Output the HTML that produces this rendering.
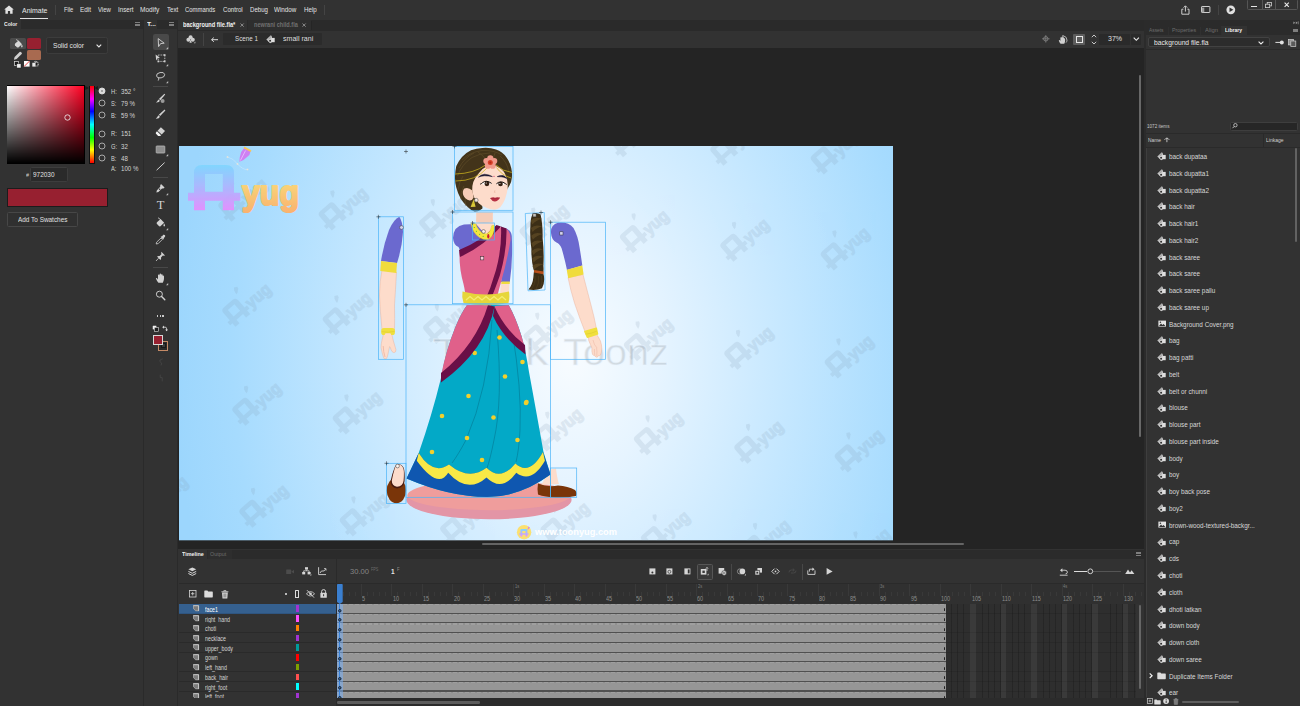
<!DOCTYPE html>
<html><head><meta charset="utf-8"><title>Animate</title>
<style>
html,body{margin:0;padding:0;background:#323232;}
body{width:1300px;height:706px;overflow:hidden;position:relative;font-family:"Liberation Sans", sans-serif;}
#app{position:absolute;left:0;top:0;width:1300px;height:706px;overflow:hidden;background:#323232;}
#app div,#app svg{position:absolute;box-sizing:border-box;}
#app svg{overflow:visible;}
.t{white-space:nowrap;font-family:"Liberation Sans", sans-serif;}
</style></head><body><div id="app">
<div style="left:0px;top:20px;width:143px;height:8.5px;background:#2b2b2b;"></div>
<div style="left:0px;top:20px;width:21px;height:8.5px;background:#323232;"></div>
<div style="left:143px;top:20px;width:1.1px;height:686px;background:#2a2a2a;"></div>
<div style="left:144.1px;top:20px;width:33px;height:8.5px;background:#2b2b2b;"></div>
<div style="left:144.1px;top:20px;width:13.4px;height:8.5px;background:#323232;"></div>
<div style="left:177px;top:20px;width:1.1px;height:686px;background:#2a2a2a;"></div>
<div style="left:178.1px;top:20px;width:966px;height:10.5px;background:#2a2a2a;"></div>
<div style="left:178.1px;top:20px;width:69px;height:10.5px;background:#323232;"></div>
<div style="left:248px;top:20px;width:63px;height:10.5px;background:#2e2e2e;"></div>
<div style="left:311px;top:20.5px;width:0.7px;height:9.5px;background:#252525;"></div>
<div style="left:178.1px;top:30.5px;width:966px;height:17.5px;background:#323232;"></div>
<div style="left:178.1px;top:30px;width:966px;height:0.8px;background:#2a2a2a;"></div>
<div style="left:178.1px;top:48px;width:966px;height:500.5px;background:#242424;"></div>
<div style="left:1144px;top:20px;width:1.7px;height:686px;background:#2b2b2b;"></div>
<div class="t" style="top:18.20px;line-height:12px;font-size:6.0px;color:#f0f0f0;transform:scaleX(0.843);transform-origin:0 50%;font-weight:700;left:4px;">Color</div>
<div style="left:135px;top:22.2px;width:5.4px;height:1.0px;background:#7e7e7e;"></div>
<div style="left:135px;top:23.55px;width:5.4px;height:1.0px;background:#7e7e7e;"></div>
<div style="left:135px;top:24.9px;width:5.4px;height:1.0px;background:#7e7e7e;"></div>
<div style="left:10.2px;top:38px;width:16px;height:11.2px;background:#4b4b4b;border-radius:1.5px"></div>
<svg style="left:13px;top:39px;" width="10" height="9" viewBox="0 0 10 9"><path d="M2.2 4.6L5.6 1.6L9 5.2L5.4 8.4Q4.6 8.9 3.9 8.2L2 6.2Q1.5 5.4 2.2 4.6Z" fill="#d8d8d8"/><path d="M3.2 0.6Q5 1 6 3.2" fill="none" stroke="#d8d8d8" stroke-width="0.8"/><path d="M8.9 5.6Q9.9 7 9.5 8Q8.8 8.8 8.2 8Q7.9 7 8.9 5.6Z" fill="#d8d8d8"/></svg>
<div style="left:27px;top:38.4px;width:14px;height:10.8px;background:#972030;border-radius:1.6px"></div>
<div style="left:27px;top:49.9px;width:14px;height:10.2px;background:#a86a50;border-radius:1.6px"></div>
<svg style="left:13px;top:50.5px;" width="10" height="9" viewBox="0 0 10 9"><path d="M1 8.3L1.6 5.9L6.6 0.9Q7.2 0.4 7.8 0.9L8.7 1.8Q9.2 2.4 8.7 3L3.6 8L1.2 8.7Z" fill="#cfcfcf"/></svg>
<svg style="left:14px;top:61px;" width="8" height="7.5" viewBox="0 0 8 7.5"><rect x="0.4" y="0.4" width="4.2" height="4.2" fill="#1a1a1a" stroke="#e0e0e0" stroke-width="0.7"/><rect x="2.8" y="2.8" width="4.2" height="4.2" fill="#f0f0f0" stroke="#1a1a1a" stroke-width="0.5"/></svg>
<svg style="left:24px;top:61.3px;" width="6" height="6" viewBox="0 0 6 6"><rect x="0" y="0" width="5.6" height="5.6" fill="#ffffff"/><path d="M0 5.6L5.6 0" stroke="#e03030" stroke-width="0.9"/></svg>
<svg style="left:31.5px;top:61px;" width="7" height="7" viewBox="0 0 7 7"><rect x="0.3" y="1.8" width="3.2" height="3.8" fill="#e8e8e8"/><rect x="3.4" y="1.2" width="2.6" height="3.8" fill="#1a1a1a" stroke="#d0d0d0" stroke-width="0.5"/><path d="M2 1Q3.6 -0.3 5.4 0.9M6.6 3L5.4 4.3" fill="none" stroke="#e0e0e0" stroke-width="0.7"/></svg>
<div style="left:46.3px;top:37.4px;width:61.7px;height:16.2px;background:#2d2d2d;border:0.8px solid #3c3c3c;border-radius:2.2px"></div>
<div class="t" style="top:39.90px;line-height:12px;font-size:7.2px;color:#e4e4e4;transform:scaleX(0.922);transform-origin:0 50%;left:53px;">Solid color</div>
<svg style="left:96px;top:44.2px;" width="6" height="4" viewBox="0 0 6 4"><path d="M0.6 0.6L2.9 2.9L5.2 0.6" fill="none" stroke="#e8e8e8" stroke-width="1.1"/></svg>
<div style="left:6.5px;top:85.3px;width:78.5px;height:78.7px;background:#000000;"></div>
<div style="left:7.3px;top:86px;width:77px;height:77.3px;background:linear-gradient(180deg,rgba(0,0,0,0),#000),linear-gradient(90deg,#fff,#ff0022);"></div>
<svg style="left:64px;top:114px;" width="7" height="7" viewBox="0 0 7 7"><circle cx="3.5" cy="3.5" r="2.7" fill="none" stroke="#f4f4f4" stroke-width="0.8"/></svg>
<div style="left:89.2px;top:85.5px;width:5.5px;height:78.3px;background:#111111;"></div>
<div style="left:89.7px;top:86px;width:4.5px;height:77.3px;background:linear-gradient(180deg,#ff0000 0%,#ff00ff 17%,#0000ff 33%,#00ffff 50%,#00ff00 67%,#ffff00 83%,#ff0000 100%);"></div>
<svg style="left:85.2px;top:86px;" width="13.2" height="4.4" viewBox="0 0 13.2 4.4"><path d="M0.2 0.1L4 2.1L0.2 4.1Z" fill="#1c1c1c"/><path d="M13 0.1L9.4 2.1L13 4.1Z" fill="#1c1c1c"/></svg>
<svg style="left:98px;top:87.2px;" width="8" height="8" viewBox="0 0 8 8"><circle cx="4" cy="4" r="3.0" fill="#dcdcdc" stroke="#dcdcdc" stroke-width="0.9"/><circle cx="4" cy="4" r="0.8" fill="#5a5a5a"/></svg>
<div class="t" style="top:85.90px;line-height:12px;font-size:6.6px;color:#d4d4d4;transform:scaleX(0.870);transform-origin:0 50%;left:111px;">H:</div>
<div class="t" style="top:85.90px;line-height:12px;font-size:6.6px;color:#d4d4d4;transform:scaleX(0.930);transform-origin:0 50%;left:120.6px;">352 °</div>
<svg style="left:98px;top:99.3px;" width="8" height="8" viewBox="0 0 8 8"><circle cx="4" cy="4" r="3.0" fill="none" stroke="#b4b4b4" stroke-width="0.9"/></svg>
<div class="t" style="top:98.00px;line-height:12px;font-size:6.6px;color:#d4d4d4;transform:scaleX(0.870);transform-origin:0 50%;left:111px;">S:</div>
<div class="t" style="top:98.00px;line-height:12px;font-size:6.6px;color:#d4d4d4;transform:scaleX(0.930);transform-origin:0 50%;left:120.6px;">79 %</div>
<svg style="left:98px;top:111.4px;" width="8" height="8" viewBox="0 0 8 8"><circle cx="4" cy="4" r="3.0" fill="none" stroke="#b4b4b4" stroke-width="0.9"/></svg>
<div class="t" style="top:110.10px;line-height:12px;font-size:6.6px;color:#d4d4d4;transform:scaleX(0.870);transform-origin:0 50%;left:111px;">B:</div>
<div class="t" style="top:110.10px;line-height:12px;font-size:6.6px;color:#d4d4d4;transform:scaleX(0.930);transform-origin:0 50%;left:120.6px;">59 %</div>
<svg style="left:98px;top:129.6px;" width="8" height="8" viewBox="0 0 8 8"><circle cx="4" cy="4" r="3.0" fill="none" stroke="#b4b4b4" stroke-width="0.9"/></svg>
<div class="t" style="top:128.30px;line-height:12px;font-size:6.6px;color:#d4d4d4;transform:scaleX(0.870);transform-origin:0 50%;left:111px;">R:</div>
<div class="t" style="top:128.30px;line-height:12px;font-size:6.6px;color:#d4d4d4;transform:scaleX(0.930);transform-origin:0 50%;left:120.6px;">151</div>
<svg style="left:98px;top:141.8px;" width="8" height="8" viewBox="0 0 8 8"><circle cx="4" cy="4" r="3.0" fill="none" stroke="#b4b4b4" stroke-width="0.9"/></svg>
<div class="t" style="top:140.50px;line-height:12px;font-size:6.6px;color:#d4d4d4;transform:scaleX(0.870);transform-origin:0 50%;left:111px;">G:</div>
<div class="t" style="top:140.50px;line-height:12px;font-size:6.6px;color:#d4d4d4;transform:scaleX(0.930);transform-origin:0 50%;left:120.6px;">32</div>
<svg style="left:98px;top:154.2px;" width="8" height="8" viewBox="0 0 8 8"><circle cx="4" cy="4" r="3.0" fill="none" stroke="#b4b4b4" stroke-width="0.9"/></svg>
<div class="t" style="top:152.90px;line-height:12px;font-size:6.6px;color:#d4d4d4;transform:scaleX(0.870);transform-origin:0 50%;left:111px;">B:</div>
<div class="t" style="top:152.90px;line-height:12px;font-size:6.6px;color:#d4d4d4;transform:scaleX(0.930);transform-origin:0 50%;left:120.6px;">48</div>
<div class="t" style="top:162.50px;line-height:12px;font-size:6.6px;color:#d4d4d4;transform:scaleX(0.870);transform-origin:0 50%;left:111px;">A:</div>
<div class="t" style="top:162.50px;line-height:12px;font-size:6.6px;color:#d4d4d4;transform:scaleX(0.930);transform-origin:0 50%;left:120.6px;">100 %</div>
<div class="t" style="top:168.70px;line-height:12px;font-size:6.2px;color:#d0d0d0;transform:scaleX(0.870);transform-origin:0 50%;left:26.4px;">#</div>
<div style="left:30.4px;top:167.4px;width:37.8px;height:14.8px;background:#2a2a2a;border:0.8px solid #3d3d3d;border-radius:1.5px"></div>
<div class="t" style="top:168.90px;line-height:12px;font-size:6.6px;color:#e0e0e0;transform:scaleX(0.976);transform-origin:0 50%;left:33px;">972030</div>
<div style="left:7.2px;top:187.8px;width:100.6px;height:19.5px;background:#972030;border:0.9px solid #1c1c1c"></div>
<div style="left:7.2px;top:211.6px;width:71.2px;height:15.5px;background:#303030;border:0.8px solid #474747;border-radius:1.5px"></div>
<div class="t" style="top:213.50px;line-height:12px;font-size:6.6px;color:#e0e0e0;transform:scaleX(0.973);transform-origin:0 50%;left:18px;">Add To Swatches</div>
<div class="t" style="top:18.20px;line-height:12px;font-size:6.2px;color:#f0f0f0;transform:scaleX(1.089);transform-origin:0 50%;font-weight:700;left:147px;">T...</div>
<div style="left:169px;top:22.2px;width:5.4px;height:1.0px;background:#7e7e7e;"></div>
<div style="left:169px;top:23.55px;width:5.4px;height:1.0px;background:#7e7e7e;"></div>
<div style="left:169px;top:24.9px;width:5.4px;height:1.0px;background:#7e7e7e;"></div>
<div style="left:152.6px;top:33.6px;width:16.3px;height:16px;background:#494949;border-radius:2px"></div>
<svg style="left:155.0px;top:36.7px;" width="11" height="11" viewBox="0 0 11 11"><path d="M3.2 1.6L9.2 6.2L5.6 6.6L3.6 9.6Z" fill="none" stroke="#d2d2d2" stroke-width="0.9" stroke-linejoin="round"/></svg>
<svg style="left:165.7px;top:47.0px;" width="2.4" height="2.4" viewBox="0 0 2.4 2.4"><path d="M2.2 0V2.2H0Z" fill="#bdbdbd"/></svg>
<svg style="left:155.0px;top:53.2px;" width="11" height="11" viewBox="0 0 11 11"><path d="M0.6 1.6L5 4.9L2.6 5.2L1.2 7.4Z" fill="#d2d2d2"/><rect x="3.2" y="2" width="6.6" height="6.4" fill="none" stroke="#d2d2d2" stroke-width="0.8" stroke-dasharray="1.4 0.9"/><rect x="8.8" y="1.2" width="1.7" height="1.7" fill="#d2d2d2"/><rect x="8.8" y="7.6" width="1.7" height="1.7" fill="#d2d2d2"/><rect x="2.5" y="7.6" width="1.7" height="1.7" fill="#d2d2d2"/></svg>
<svg style="left:165.7px;top:63.5px;" width="2.4" height="2.4" viewBox="0 0 2.4 2.4"><path d="M2.2 0V2.2H0Z" fill="#bdbdbd"/></svg>
<svg style="left:155.0px;top:70.6px;" width="11" height="11" viewBox="0 0 11 11"><ellipse cx="5.6" cy="4.2" rx="4.1" ry="2.7" fill="none" stroke="#d2d2d2" stroke-width="0.85" transform="rotate(-12 5.6 4.2)"/><path d="M3.2 6.6Q4.6 7.8 3.2 9.6" fill="none" stroke="#d2d2d2" stroke-width="0.85"/></svg>
<svg style="left:165.7px;top:80.89999999999999px;" width="2.4" height="2.4" viewBox="0 0 2.4 2.4"><path d="M2.2 0V2.2H0Z" fill="#bdbdbd"/></svg>
<div style="left:153px;top:86.4px;width:15px;height:0.8px;background:#484848;"></div>
<svg style="left:155.0px;top:92.7px;" width="11" height="11" viewBox="0 0 11 11"><path d="M9.4 0.8L10.2 1.6L5.4 7.2L3.9 6.1Z" fill="#d2d2d2"/><path d="M3.4 6.6L4.9 7.8Q4.6 9.8 1 9.6Q2.4 8.6 3.4 6.6Z" fill="#d2d2d2"/><circle cx="7.6" cy="8" r="2" fill="#9a9a9a"/></svg>
<svg style="left:155.0px;top:109.3px;" width="11" height="11" viewBox="0 0 11 11"><path d="M9.6 0.6L10.4 1.4L5.2 7L3.8 5.8Z" fill="#d2d2d2"/><path d="M3.3 6.3L4.8 7.6Q4.4 9.9 0.8 9.8Q2.3 8.6 3.3 6.3Z" fill="#d2d2d2"/></svg>
<svg style="left:155.0px;top:126.30000000000001px;" width="11" height="11" viewBox="0 0 11 11"><path d="M5.9 1.2L10 5.1L6.7 8.6L2.6 4.7Z" fill="#d2d2d2"/><path d="M2 5.3L6.1 9.2L5.2 10L3.2 10L1 7.8Q0.5 7 1.1 6.3Z" fill="#f2f2f2"/></svg>
<svg style="left:155.0px;top:143.8px;" width="11" height="11" viewBox="0 0 11 11"><rect x="1.2" y="2" width="8.6" height="7" rx="0.6" fill="#8e8e8e" stroke="#b8b8b8" stroke-width="0.8"/></svg>
<svg style="left:165.7px;top:154.10000000000002px;" width="2.4" height="2.4" viewBox="0 0 2.4 2.4"><path d="M2.2 0V2.2H0Z" fill="#bdbdbd"/></svg>
<svg style="left:155.0px;top:161.3px;" width="11" height="11" viewBox="0 0 11 11"><path d="M1.6 9.2L9.6 1.6" stroke="#d2d2d2" stroke-width="1"/></svg>
<div style="left:153px;top:176.6px;width:15px;height:0.8px;background:#484848;"></div>
<svg style="left:155.0px;top:182.6px;" width="11" height="11" viewBox="0 0 11 11"><path d="M6 1L9.6 4.6L8.4 5.6L7 5.6L3.4 9L1.4 9.4L1.8 7.4L5.2 3.8L5.2 2.4Z" fill="#d2d2d2"/><circle cx="4.6" cy="6.2" r="0.8" fill="#323232"/></svg>
<svg style="left:165.7px;top:192.9px;" width="2.4" height="2.4" viewBox="0 0 2.4 2.4"><path d="M2.2 0V2.2H0Z" fill="#bdbdbd"/></svg>
<div class="t" style="left:155.5px;top:198.4px;width:10px;text-align:center;line-height:14px;font-size:12.5px;color:#d2d2d2;font-family:'Liberation Serif',serif;">T</div>
<svg style="left:155.0px;top:217.3px;" width="11" height="11" viewBox="0 0 11 11"><path d="M2 5.2L5.6 2L9.2 5.8L5.4 9.2Q4.6 9.7 3.9 9L1.8 6.8Q1.3 6 2 5.2Z" fill="#d2d2d2"/><path d="M3 0.8Q5 1.3 6 3.6" fill="none" stroke="#d2d2d2" stroke-width="0.8"/><path d="M9.2 6.4Q10.4 8 9.9 9.1Q9.1 9.9 8.5 9.1Q8.1 8 9.2 6.4Z" fill="#d2d2d2"/></svg>
<svg style="left:165.7px;top:227.60000000000002px;" width="2.4" height="2.4" viewBox="0 0 2.4 2.4"><path d="M2.2 0V2.2H0Z" fill="#bdbdbd"/></svg>
<svg style="left:155.0px;top:234.4px;" width="11" height="11" viewBox="0 0 11 11"><path d="M8.2 0.8Q9.4 0.4 10 1.2Q10.6 2 9.8 3L8.6 4.2L9 4.8L8.2 5.6L5.6 3L6.4 2.2L7 2.6Z" fill="#d2d2d2"/><path d="M6 4L7.4 5.4L3.2 9.6L1.2 10L1.6 8.2Z" fill="none" stroke="#d2d2d2" stroke-width="0.8"/></svg>
<svg style="left:155.0px;top:250.8px;" width="11" height="11" viewBox="0 0 11 11"><path d="M6.4 0.8L10 4.4L9 4.8L7.8 4.6L6 6.4Q6.4 8 5.4 9L2 5.6Q3 4.6 4.6 5L6.4 3.2L6.2 2Z" fill="#d2d2d2"/><path d="M3.6 7.2L1 10" stroke="#d2d2d2" stroke-width="0.8"/></svg>
<div style="left:153px;top:267.3px;width:15px;height:0.8px;background:#484848;"></div>
<svg style="left:155.0px;top:272.6px;" width="11" height="11" viewBox="0 0 11 11"><path d="M3.4 9.8Q1.6 7.6 0.9 5.6Q0.9 4.8 1.7 5Q2.6 5.6 3 6.4L3 2.2Q3.1 1.4 3.8 1.5Q4.4 1.6 4.4 2.4L4.6 1.2Q4.8 0.5 5.4 0.6Q6 0.7 6 1.5L6.2 1.6Q6.5 1 7.1 1.2Q7.6 1.4 7.6 2.2L7.8 2.8Q8.2 2.4 8.7 2.7Q9.1 3 9 3.8Q9.2 6 8.6 7.8Q8.2 9 7.8 9.8Z" fill="#d2d2d2"/></svg>
<svg style="left:165.7px;top:282.90000000000003px;" width="2.4" height="2.4" viewBox="0 0 2.4 2.4"><path d="M2.2 0V2.2H0Z" fill="#bdbdbd"/></svg>
<svg style="left:155.0px;top:290.1px;" width="11" height="11" viewBox="0 0 11 11"><circle cx="4.4" cy="4.2" r="3" fill="none" stroke="#d2d2d2" stroke-width="0.95"/><path d="M6.6 6.4L9.8 9.8" stroke="#d2d2d2" stroke-width="1.4" stroke-linecap="round"/></svg>
<div style="left:156.6px;top:315.3px;width:1.6px;height:1.5px;background:#c8c8c8;"></div>
<div style="left:159.5px;top:315.3px;width:1.6px;height:1.5px;background:#c8c8c8;"></div>
<div style="left:162.4px;top:315.3px;width:1.6px;height:1.5px;background:#c8c8c8;"></div>
<svg style="left:152.4px;top:324.6px;" width="7" height="7" viewBox="0 0 7 7"><rect x="0.4" y="0.4" width="4.4" height="4.4" fill="#f0f0f0" stroke="#202020" stroke-width="0.5"/><rect x="2.3" y="2.3" width="4.2" height="4.2" fill="#202020" stroke="#e0e0e0" stroke-width="0.6"/></svg>
<svg style="left:162.4px;top:325px;" width="6" height="6.5" viewBox="0 0 6 6.5"><path d="M0.8 2.2H3.2Q4.6 2.2 4.6 3.8V6" fill="none" stroke="#d8d8d8" stroke-width="0.9"/><path d="M2 0.6L0.3 2.2L2 3.8Z" fill="#d8d8d8"/><path d="M3.2 4.6L4.6 6.3L6 4.6Z" fill="#d8d8d8"/></svg>
<div style="left:158.2px;top:340.6px;width:9.8px;height:10.2px;background:#2a2a2a;border:1.6px solid #c48a66"></div>
<div style="left:160.6px;top:343px;width:5px;height:5.4px;background:#3a3a3a;border:0.6px solid #1a1a1a"></div>
<div style="left:152.9px;top:334.8px;width:10.2px;height:10.2px;background:#972030;border:0.7px solid #d8d8d8"></div>
<svg style="left:157.5px;top:357.5px;" width="6" height="8" viewBox="0 0 6 8"><path d="M4.8 0.8Q1.2 1.4 1.8 3.4Q5 5 3 7.4" fill="none" stroke="#484848" stroke-width="0.8"/></svg>
<svg style="left:157.5px;top:374px;" width="6" height="8" viewBox="0 0 6 8"><path d="M2.2 0.6V3.6H4.2V7.4" fill="none" stroke="#484848" stroke-width="0.8"/></svg>
<svg style="left:4px;top:5.4px;" width="10" height="9" viewBox="0 0 10 9"><path d="M5 0.4L9.8 4.6H8.6V8.8H6.1V6H3.9V8.8H1.4V4.6H0.2Z" fill="#e2e2e2"/></svg>
<div class="t" style="top:5.00px;line-height:12px;font-size:7.4px;color:#e8e8e8;transform:scaleX(0.939);transform-origin:0 50%;left:22px;">Animate</div>
<div style="left:20.3px;top:17.7px;width:28px;height:1.1px;background:#e0e0e0;"></div>
<div style="left:54.8px;top:5px;width:0.8px;height:9.5px;background:#444444;"></div>
<div class="t" style="top:3.70px;line-height:12px;font-size:7.0px;color:#e2e2e2;transform:scaleX(0.825);transform-origin:0 50%;left:64px;">File</div>
<div class="t" style="top:3.70px;line-height:12px;font-size:7.0px;color:#e2e2e2;transform:scaleX(0.912);transform-origin:0 50%;left:80px;">Edit</div>
<div class="t" style="top:3.70px;line-height:12px;font-size:7.0px;color:#e2e2e2;transform:scaleX(0.851);transform-origin:0 50%;left:97.9px;">View</div>
<div class="t" style="top:3.70px;line-height:12px;font-size:7.0px;color:#e2e2e2;transform:scaleX(0.880);transform-origin:0 50%;left:117.9px;">Insert</div>
<div class="t" style="top:3.70px;line-height:12px;font-size:7.0px;color:#e2e2e2;transform:scaleX(0.936);transform-origin:0 50%;left:140.2px;">Modify</div>
<div class="t" style="top:3.70px;line-height:12px;font-size:7.0px;color:#e2e2e2;transform:scaleX(0.880);transform-origin:0 50%;left:166.8px;">Text</div>
<div class="t" style="top:3.70px;line-height:12px;font-size:7.0px;color:#e2e2e2;transform:scaleX(0.844);transform-origin:0 50%;left:185.3px;">Commands</div>
<div class="t" style="top:3.70px;line-height:12px;font-size:7.0px;color:#e2e2e2;transform:scaleX(0.873);transform-origin:0 50%;left:222.6px;">Control</div>
<div class="t" style="top:3.70px;line-height:12px;font-size:7.0px;color:#e2e2e2;transform:scaleX(0.868);transform-origin:0 50%;left:249.5px;">Debug</div>
<div class="t" style="top:3.70px;line-height:12px;font-size:7.0px;color:#e2e2e2;transform:scaleX(0.896);transform-origin:0 50%;left:274.4px;">Window</div>
<div class="t" style="top:3.70px;line-height:12px;font-size:7.0px;color:#e2e2e2;transform:scaleX(0.889);transform-origin:0 50%;left:303.6px;">Help</div>
<div style="left:323.5px;top:5px;width:0.8px;height:9.5px;background:#444444;"></div>
<svg style="left:1180.5px;top:4.5px;" width="9" height="10" viewBox="0 0 9 10"><path d="M2.4 4.2H0.8V9.2H8V4.2H6.4" fill="none" stroke="#e0e0e0" stroke-width="0.9"/><path d="M4.4 6.6V1.2M2.6 2.6L4.4 0.8L6.2 2.6" fill="none" stroke="#e0e0e0" stroke-width="0.9"/></svg>
<svg style="left:1201px;top:6.4px;" width="10" height="7" viewBox="0 0 10 7"><rect x="0.5" y="0.5" width="8.4" height="6" rx="0.6" fill="none" stroke="#e0e0e0" stroke-width="0.9"/><rect x="0.9" y="1.6" width="2.4" height="4.6" fill="#9a9a9a"/></svg>
<div style="left:1218px;top:4.5px;width:0.8px;height:10px;background:#444444;"></div>
<svg style="left:1225.8px;top:5px;" width="10" height="10" viewBox="0 0 10 10"><circle cx="4.8" cy="4.8" r="4.4" fill="#e0e0e0"/><path d="M3.5 2.5L7.4 4.8L3.5 7.1Z" fill="#323232"/></svg>
<div style="left:1246.5px;top:-1px;width:51.8px;height:10.6px;background:rgba(0,0,0,0);border:0.8px solid #555555;border-radius:1.5px"></div>
<div style="left:1261.6px;top:0px;width:0.8px;height:9px;background:#555555;"></div>
<div style="left:1274.8px;top:0px;width:0.8px;height:9px;background:#555555;"></div>
<div style="left:1250.8px;top:5.8px;width:6px;height:1.1px;background:#e4e4e4;"></div>
<svg style="left:1264.5px;top:1.6px;" width="8" height="6.5" viewBox="0 0 8 6.5"><rect x="2.2" y="0.5" width="4.2" height="3.4" fill="none" stroke="#d0d0d0" stroke-width="0.8"/><rect x="0.5" y="2.2" width="4.2" height="3.4" fill="#323232" stroke="#d0d0d0" stroke-width="0.8"/></svg>
<svg style="left:1284px;top:2px;" width="6" height="6" viewBox="0 0 6 6"><path d="M0.6 0.6L4.8 4.8M4.8 0.6L0.6 4.8" stroke="#ececec" stroke-width="1.1"/></svg>
<div class="t" style="top:18.90px;line-height:12px;font-size:6.3px;color:#f2f2f2;transform:scaleX(0.895);transform-origin:0 50%;font-weight:700;left:182.7px;">background file.fla*</div>
<div class="t" style="top:18.90px;line-height:12px;font-size:6.3px;color:#707070;transform:scaleX(0.889);transform-origin:0 50%;font-weight:700;left:253.8px;">newrani child.fla</div>
<svg style="left:239.5px;top:23px;" width="4.5" height="4.5" viewBox="0 0 4.5 4.5"><path d="M0.5 0.5L3.7 3.7M3.7 0.5L0.5 3.7" stroke="#b0b0b0" stroke-width="0.7"/></svg>
<svg style="left:302px;top:23px;" width="4.5" height="4.5" viewBox="0 0 4.5 4.5"><path d="M0.5 0.5L3.7 3.7M3.7 0.5L0.5 3.7" stroke="#b0b0b0" stroke-width="0.7"/></svg>
<svg style="left:185.8px;top:35px;" width="10" height="9" viewBox="0 0 10 9"><circle cx="4.6" cy="2.2" r="2" fill="#cfcfcf"/><circle cx="2.4" cy="4.8" r="2" fill="#cfcfcf"/><circle cx="6.8" cy="4.8" r="2" fill="#cfcfcf"/><path d="M4.6 4.4L5.8 7.8H3.4Z" fill="#cfcfcf"/><path d="M9.4 6.6V8.2H7.8Z" fill="#bdbdbd"/></svg>
<div style="left:203px;top:33px;width:0.8px;height:12.5px;background:#444444;"></div>
<svg style="left:211.3px;top:36.6px;" width="7.5" height="5.5" viewBox="0 0 7.5 5.5"><path d="M0.6 2.7H7M2.8 0.6L0.6 2.7L2.8 4.8" fill="none" stroke="#dcdcdc" stroke-width="1"/></svg>
<div style="left:222.9px;top:33.3px;width:99px;height:11.9px;background:#2b2b2b;border-radius:1px"></div>
<div class="t" style="top:32.90px;line-height:12px;font-size:6.8px;color:#dedede;transform:scaleX(0.922);transform-origin:0 50%;left:234.5px;">Scene 1</div>
<svg style="left:266px;top:35px;" width="9.5" height="8" viewBox="0 0 9.5 8"><path d="M0.3 4.6L4.9 0.3L6 1.4V7.2L4.2 8.2Z" fill="#c4c4c4"/><path d="M1.6 3.6L5 0.9M2.4 4.4L5.4 1.9" stroke="#8a8a8a" stroke-width="0.5"/><rect x="5.3" y="2.9" width="3.4" height="4.3" fill="#dedede"/><circle cx="4.1" cy="5.8" r="1.75" fill="#d8d8d8"/><circle cx="4.1" cy="5.8" r="0.95" fill="#262626"/></svg>
<div class="t" style="top:32.90px;line-height:12px;font-size:6.8px;color:#dedede;transform:scaleX(1.041);transform-origin:0 50%;left:282.7px;">small rani</div>
<svg style="left:1042px;top:35.4px;" width="8" height="8" viewBox="0 0 8 8"><circle cx="3.8" cy="3.8" r="2.2" fill="none" stroke="#8a8a8a" stroke-width="0.8"/><path d="M3.8 0V7.6M0 3.8H7.6" stroke="#8a8a8a" stroke-width="0.7"/></svg>
<svg style="left:1057.5px;top:34.6px;" width="10" height="9.5" viewBox="0 0 10 9.5"><path d="M2.6 8.8Q1.2 7 0.8 5.4Q0.9 4.8 1.5 5Q2.2 5.5 2.4 6L2.4 2.8Q2.5 2.2 3 2.3Q3.5 2.4 3.5 3L3.6 2Q3.8 1.5 4.3 1.6Q4.7 1.7 4.7 2.3L4.9 2.4Q5.2 2 5.6 2.2Q6 2.4 6 3L6.2 3.4Q6.6 3.2 6.9 3.5Q7.2 3.8 7.1 4.4Q7.2 6.2 6.8 7.4Q6.5 8.2 6.2 8.8Z" fill="#d0d0d0"/><path d="M5.4 0.8Q9 1.6 9 5.2Q8.9 6.6 8 7.6" fill="none" stroke="#d0d0d0" stroke-width="0.8"/><path d="M4.4 0L6 0.9L4.6 2Z" fill="#d0d0d0"/></svg>
<div style="left:1073px;top:33.5px;width:12.2px;height:11.4px;background:#5c5c5c;border-radius:1px"></div>
<div style="left:1075.6px;top:35.8px;width:7px;height:6.8px;background:rgba(0,0,0,0);border:1.5px solid #e6e6e6"></div>
<svg style="left:1090.8px;top:33.6px;" width="6" height="11" viewBox="0 0 6 11"><path d="M0.8 3.2L3 1L5.2 3.2M0.8 7.8L3 10L5.2 7.8" fill="none" stroke="#d8d8d8" stroke-width="0.9"/></svg>
<div style="left:1098.7px;top:33.5px;width:31.8px;height:11.4px;background:#2a2a2a;border-radius:1px"></div>
<div class="t" style="top:33.30px;line-height:12px;font-size:6.8px;color:#e0e0e0;transform:scaleX(1.029);transform-origin:0 50%;left:1108px;">37%</div>
<div style="left:1131px;top:33.5px;width:10px;height:11.4px;background:#2a2a2a;border-radius:1px"></div>
<svg style="left:1132.6px;top:37.2px;" width="7" height="4.5" viewBox="0 0 7 4.5"><path d="M0.7 0.7L3.3 3.3L5.9 0.7" fill="none" stroke="#ececec" stroke-width="1.1"/></svg>
<svg style="left:0px;top:0px;" width="1300" height="706" viewBox="0 0 1300 706"><defs>
<radialGradient id="bgG" gradientUnits="userSpaceOnUse" cx="572" cy="355" r="400" gradientTransform="translate(572 355) scale(1 1.42) translate(-572 -355)">
<stop offset="0" stop-color="#f8fcff"/><stop offset="0.22" stop-color="#e6f4ff"/><stop offset="0.55" stop-color="#c4e7ff"/><stop offset="0.85" stop-color="#a6dbfe"/><stop offset="1" stop-color="#9cd6fd"/></radialGradient>
<linearGradient id="lgA" x1="0" y1="0" x2="0" y2="1"><stop offset="0" stop-color="#80d6ff"/><stop offset="0.55" stop-color="#b4b0ff"/><stop offset="1" stop-color="#e78cff"/></linearGradient>
<linearGradient id="lgY" x1="0" y1="0" x2="0" y2="1"><stop offset="0" stop-color="#ffe272"/><stop offset="1" stop-color="#ffb066"/></linearGradient>
<clipPath id="stageClip"><rect x="179" y="146" width="714" height="394.29999999999995"/></clipPath>
<g id="wm"><g transform="scale(0.49) translate(-214 -187.5)"><path d="M194 173Q194 165 202 165H226Q234 165 234 173V192.7H240.3V200.8H234V210.2H222.8V200.8H205V210.2H194V200.8H188V192.7H194ZM205 174V191.8H222.8V174Z" fill-rule="evenodd" stroke="none"/><text x="242" y="204.6" font-family="Liberation Sans, sans-serif" font-weight="700" font-size="35" textLength="57" lengthAdjust="spacingAndGlyphs" stroke-width="2.2" stroke-linejoin="round">yug</text><path d="M244.6 147.6L250.6 151L249.4 155L243.5 160L239.4 161.8L239.8 157L241.2 152Z" stroke="none"/></g></g>
</defs>
<rect x="179" y="146" width="714" height="394.29999999999995" fill="url(#bgG)"/>
<g clip-path="url(#stageClip)">
<use href="#wm" transform="translate(623.1 142.4) rotate(-41)" fill="#7f96ad" stroke="#7f96ad" opacity="0.165"/>
<use href="#wm" transform="translate(723.5 151.0) rotate(-41)" fill="#7f96ad" stroke="#7f96ad" opacity="0.165"/>
<use href="#wm" transform="translate(823.9 159.6) rotate(-41)" fill="#7f96ad" stroke="#7f96ad" opacity="0.165"/>
<use href="#wm" transform="translate(231.5 207.0) rotate(-41)" fill="#7f96ad" stroke="#7f96ad" opacity="0.165"/>
<use href="#wm" transform="translate(331.9 215.6) rotate(-41)" fill="#7f96ad" stroke="#7f96ad" opacity="0.165"/>
<use href="#wm" transform="translate(432.3 224.2) rotate(-41)" fill="#7f96ad" stroke="#7f96ad" opacity="0.165"/>
<use href="#wm" transform="translate(532.7 232.8) rotate(-41)" fill="#7f96ad" stroke="#7f96ad" opacity="0.165"/>
<use href="#wm" transform="translate(633.1 238.4) rotate(-41)" fill="#7f96ad" stroke="#7f96ad" opacity="0.165"/>
<use href="#wm" transform="translate(733.5 247.0) rotate(-41)" fill="#7f96ad" stroke="#7f96ad" opacity="0.165"/>
<use href="#wm" transform="translate(833.9 255.6) rotate(-41)" fill="#7f96ad" stroke="#7f96ad" opacity="0.165"/>
<use href="#wm" transform="translate(235.5 312.0) rotate(-41)" fill="#7f96ad" stroke="#7f96ad" opacity="0.165"/>
<use href="#wm" transform="translate(335.9 320.6) rotate(-41)" fill="#7f96ad" stroke="#7f96ad" opacity="0.165"/>
<use href="#wm" transform="translate(436.3 329.2) rotate(-41)" fill="#7f96ad" stroke="#7f96ad" opacity="0.165"/>
<use href="#wm" transform="translate(536.7 337.8) rotate(-41)" fill="#7f96ad" stroke="#7f96ad" opacity="0.165"/>
<use href="#wm" transform="translate(637.1 346.4) rotate(-41)" fill="#7f96ad" stroke="#7f96ad" opacity="0.165"/>
<use href="#wm" transform="translate(737.5 355.0) rotate(-41)" fill="#7f96ad" stroke="#7f96ad" opacity="0.165"/>
<use href="#wm" transform="translate(837.9 363.6) rotate(-41)" fill="#7f96ad" stroke="#7f96ad" opacity="0.165"/>
<use href="#wm" transform="translate(245.5 411.0) rotate(-41)" fill="#7f96ad" stroke="#7f96ad" opacity="0.165"/>
<use href="#wm" transform="translate(345.9 419.6) rotate(-41)" fill="#7f96ad" stroke="#7f96ad" opacity="0.165"/>
<use href="#wm" transform="translate(446.3 428.2) rotate(-41)" fill="#7f96ad" stroke="#7f96ad" opacity="0.165"/>
<use href="#wm" transform="translate(546.7 436.8) rotate(-41)" fill="#7f96ad" stroke="#7f96ad" opacity="0.165"/>
<use href="#wm" transform="translate(647.1 440.4) rotate(-41)" fill="#7f96ad" stroke="#7f96ad" opacity="0.165"/>
<use href="#wm" transform="translate(747.5 449.0) rotate(-41)" fill="#7f96ad" stroke="#7f96ad" opacity="0.165"/>
<use href="#wm" transform="translate(847.9 457.6) rotate(-41)" fill="#7f96ad" stroke="#7f96ad" opacity="0.165"/>
<use href="#wm" transform="translate(152.1 504.4) rotate(-41)" fill="#7f96ad" stroke="#7f96ad" opacity="0.165"/>
<use href="#wm" transform="translate(252.5 513.0) rotate(-41)" fill="#7f96ad" stroke="#7f96ad" opacity="0.165"/>
<use href="#wm" transform="translate(352.9 521.6) rotate(-41)" fill="#7f96ad" stroke="#7f96ad" opacity="0.165"/>
<use href="#wm" transform="translate(453.3 530.2) rotate(-41)" fill="#7f96ad" stroke="#7f96ad" opacity="0.165"/>
<use href="#wm" transform="translate(553.7 530.8) rotate(-41)" fill="#7f96ad" stroke="#7f96ad" opacity="0.165"/>
<use href="#wm" transform="translate(654.1 539.4) rotate(-41)" fill="#7f96ad" stroke="#7f96ad" opacity="0.165"/>
<use href="#wm" transform="translate(754.5 548.0) rotate(-41)" fill="#7f96ad" stroke="#7f96ad" opacity="0.165"/>
<use href="#wm" transform="translate(854.9 556.6) rotate(-41)" fill="#7f96ad" stroke="#7f96ad" opacity="0.165"/>
<g font-family="Liberation Sans, sans-serif" font-size="37" fill="#90989f" fill-opacity="0.33" stroke="#eaf5ff" stroke-opacity="0.6" stroke-width="1.2"><text x="432.5" y="365.3" textLength="116" lengthAdjust="spacingAndGlyphs">Think</text><text x="563.3" y="365.3" textLength="105.5" lengthAdjust="spacingAndGlyphs">Toonz</text></g>
<g opacity="0.93"><path d="M194 173Q194 165 202 165H226Q234 165 234 173V192.7H240.3V200.8H234V210.2H222.8V200.8H205V210.2H194V200.8H188V192.7H194ZM205 174V191.8H222.8V174Z" fill="url(#lgA)" fill-rule="evenodd"/>
<text x="242" y="204.6" font-family="Liberation Sans, sans-serif" font-weight="700" font-size="35" textLength="57" lengthAdjust="spacingAndGlyphs" fill="url(#lgY)" stroke="url(#lgY)" stroke-width="2.2" stroke-linejoin="round">yug</text>
<path d="M244.6 147.6L250.6 151L249.4 155L243.5 160L239.4 161.8L239.8 157L241.2 152Z" fill="#d27af2"/><path d="M245.6 150.5L240.3 160.6" stroke="#f0c0ff" stroke-width="0.8"/><path d="M244.3 146.6L251.4 150.3L250.7 151.9L243.6 148.2Z" fill="#ffc64e"/>
<path d="M227.5 157Q233 158 237.5 164Q243 170 247.5 169.5" fill="none" stroke="#ffffff" stroke-opacity="0.55" stroke-width="0.5"/><rect x="226.7" y="156.2" width="1.6" height="1.6" fill="#ffe8d0" fill-opacity="0.8"/><rect x="236.7" y="163.2" width="1.6" height="1.6" fill="#ffe8d0" fill-opacity="0.8"/><rect x="246.7" y="168.7" width="1.6" height="1.6" fill="#ffe8d0" fill-opacity="0.8"/></g>
<ellipse cx="489" cy="499.8" rx="82.6" ry="19.5" fill="#e395a6"/>
<ellipse cx="489" cy="495.2" rx="81.6" ry="15" fill="#ef9d9c"/>
<path d="M532.5 214.2Q536.5 211.8 540.6 214.6Q542.8 224 542.6 238Q544.2 252 543.4 266Q543.8 270 543.2 273Q545.8 281 542 288.2Q536.5 290.8 528.4 289.6Q532.8 284.5 533.4 277Q533.6 274 534 271Q531 260 531.4 249Q529.6 236 530.4 226Q530.4 218.5 532.5 214.2Z" fill="#3c2e16"/>
<path d="M530.8 220.5Q534.8 216.0 542.1 219.0Q536.8 219.5 532.3 224.5Z" fill="#5c4824" fill-opacity="0.8"/>
<path d="M531.0 228.1Q535.0 223.6 542.3 226.6Q537.0 227.1 532.5 232.1Z" fill="#5c4824" fill-opacity="0.8"/>
<path d="M531.3 235.7Q535.3 231.2 542.6 234.2Q537.3 234.7 532.8 239.7Z" fill="#5c4824" fill-opacity="0.8"/>
<path d="M531.5 243.3Q535.5 238.8 542.8 241.8Q537.5 242.3 533.0 247.3Z" fill="#5c4824" fill-opacity="0.8"/>
<path d="M531.8 250.9Q535.8 246.4 543.1 249.4Q537.8 249.9 533.3 254.9Z" fill="#5c4824" fill-opacity="0.8"/>
<path d="M532.1 258.5Q536.1 254.0 543.4 257.0Q538.1 257.5 533.6 262.5Z" fill="#5c4824" fill-opacity="0.8"/>
<path d="M532.4 266.1Q536.4 261.6 543.7 264.6Q538.4 265.1 533.9 270.1Z" fill="#5c4824" fill-opacity="0.8"/>
<path d="M534.2 270L543.6 271.6L543.3 274.2L534 272.6Z" fill="#b8501c"/>
<path d="M535 276Q536 284 531 289M538.5 276Q539.5 283 536 289.5M541.5 276Q543 282 540.5 288" fill="none" stroke="#5c4824" stroke-width="0.5" stroke-opacity="0.8"/>
<path d="M382 270L396.5 272Q395.5 290 394.5 305Q394.8 320 394.5 330L382 330Q380 310 379.5 295Q379.8 280 382 270Z" fill="#fddccb" stroke="#e8a890" stroke-width="0.4"/>
<path d="M383.4 334L391.8 334Q392.6 338 393.4 341Q394.6 345 395.9 349.6Q396.2 352.4 393.9 352.7Q391.6 352 391 349.6Q390.6 347.6 389.6 346.6Q388.8 350 388 354Q387.4 357.6 386 359Q384.4 359.6 383.6 357.6Q382 353 381 347.6Q381 344 382 340Q382.8 337 383.4 334Z" fill="#fddccb" stroke="#e8a890" stroke-width="0.4"/>
<path d="M383.2 346Q383.4 352 385 357" fill="none" stroke="#eeb8a4" stroke-width="0.9"/>
<rect x="381.2" y="328.1" width="13.7" height="6.9" rx="2.6" fill="#f0e03e"/><path d="M381.6 331.6Q388 333 394.6 331.4" fill="none" stroke="#d8c62c" stroke-width="0.5"/><path d="M384.6 335.2Q384.8 333.2 386 333.2H390Q391 333.2 391.2 335.2Z" fill="#fddccb"/>
<path d="M399.3 216.8Q402.5 221 403 232Q402 248 397 263L381 261Q383.5 245 389 230Q394 219 399.3 216.8Z" fill="#6b69cf"/>
<path d="M381 261L397 263L396.3 273L380.3 271Z" fill="#f0dc3c"/>
<path d="M568 277.5L583 274.5Q587 290 591 305Q594.5 318 596.5 329L585.5 333Q579.5 318 574.5 303Q570.5 290 568 277.5Z" fill="#fddccb" stroke="#e8a890" stroke-width="0.4"/>
<path d="M588.7 335.3L596 333.6Q598.6 337 600.5 341Q601.8 345 601.8 348.7Q601.6 352.4 600.5 355Q599.6 356.2 598.6 355.4Q598 357.4 596.6 357.2Q595 356.8 594.6 355.4Q593.4 355.6 592.5 354.4Q591.6 351.6 591.9 348Q590.4 344.6 588.7 340.4Q588.2 337.6 588.7 335.3Z" fill="#fddccb" stroke="#e8a890" stroke-width="0.4"/>
<path d="M593 340Q594 345 596.6 347.4M596.6 347.4Q597.2 352 596.8 356M594.4 349Q594.4 352.6 594.8 355.2" fill="none" stroke="#e8b09c" stroke-width="0.45"/>
<path d="M584.9 331.5L596.3 328.3L597.5 333.9L587.4 337.2Z" fill="#f0e03e" stroke="#f0e03e" stroke-width="1.6" stroke-linejoin="round"/><path d="M585.6 334.2Q591 333.8 597 331" fill="none" stroke="#d8c62c" stroke-width="0.5"/>
<path d="M551 233Q550.5 224.5 558 222.7Q568 221.5 573.5 228Q578 236 579.5 247Q581 256 582.3 265.5L567 270Q564.5 258 561.5 248Q559.5 243.5 556.5 242.5Q551.5 240 551 233Z" fill="#6b69cf"/>
<path d="M566.7 269.8L582.3 265.5L583.6 274.5L568.2 278.3Z" fill="#f0dc3c"/>
<ellipse cx="396.4" cy="490.6" rx="9.7" ry="12.7" fill="#7a3509"/>
<path d="M390.6 481Q390.4 487.6 397 488.4Q404 488 404.6 481Q405 472 403.8 468Q402 464.2 398.6 464.2Q395.6 464.4 394.4 468Q392 474 390.6 481Z" fill="#4a1c10"/>
<path d="M391.8 480.6Q391.8 486 397 486.8Q403 486.4 403.6 480.6Q404.4 472 403.4 468.4Q401.8 464.6 398.6 464.6Q395.8 464.8 394.8 468.2Q393 474 391.8 480.6Z" fill="#fddccb"/>
<path d="M547 470L556 468.5Q557 478 559 484L541 485Q545 480 547 470Z" fill="#fddccb"/>
<path d="M538 483.5Q548 487.5 558 485.5Q568 486 575 490Q577.5 493 576 496Q566 498 556 497.5Q545 497 538 494.5Q537 489 538 483.5Z" fill="#7a3509"/>
<path d="M467 305L508.7 305Q516 318 521.5 336Q526 352 529 372Q536 410 543.5 452L550.5 474.6Q520 497 487 497Q450 497 406.5 478.5L418.7 453Q432 415 441 378Q446 350 455 328Q461 313 467 305Z" fill="#03a9c7"/>
<path d="M418.7 453Q432.95 475.65 449 464.5Q469.05 481.25 486.5 467.8Q500.45 481.7 515.4 463.6Q529.2 476.6 543 452L550.5 474.6Q520 497 487 497Q450 497 406.5 478.5Z" fill="#0f57b0"/>
<path d="M418.7 453Q432.95 475.65 449 464.5Q469.05 481.25 486.5 467.8Q500.45 481.7 515.4 463.6Q529.2 476.6 543 452L544.9 460.8Q531.4 484.2 516.3 472.8Q501.8 492.5 486.5 477.4Q467.65 494.3 448.2 472.8Q438.1 489.8 416.8 460.8Z" fill="#f8e846"/>
<path d="M492 320Q488 390 466 440Q458 455 452 463" fill="none" stroke="#046f88" stroke-width="0.5"/>
<path d="M497 330Q503 400 494 440Q490 460 487 468" fill="none" stroke="#046f88" stroke-width="0.5"/>
<path d="M512 330Q522 390 520 430Q519 450 516 462" fill="none" stroke="#046f88" stroke-width="0.5"/>
<circle cx="499.5" cy="337.5" r="2.3" fill="#f2d02c"/>
<circle cx="474.7" cy="353" r="2.3" fill="#f2d02c"/>
<circle cx="522.5" cy="362" r="2.3" fill="#f2d02c"/>
<circle cx="505" cy="376.5" r="2.3" fill="#f2d02c"/>
<circle cx="468.5" cy="396" r="2.3" fill="#f2d02c"/>
<circle cx="526.5" cy="402" r="2.3" fill="#f2d02c"/>
<circle cx="442" cy="416" r="2.3" fill="#f2d02c"/>
<circle cx="493.5" cy="417.5" r="2.3" fill="#f2d02c"/>
<circle cx="526" cy="403" r="2.3" fill="#f2d02c"/>
<circle cx="467" cy="438" r="2.3" fill="#f2d02c"/>
<circle cx="517.5" cy="440" r="2.3" fill="#f2d02c"/>
<circle cx="432" cy="452" r="2.3" fill="#f2d02c"/>
<circle cx="482" cy="460" r="2.3" fill="#f2d02c"/>
<path d="M467 305L491 305Q480 340 441 376Q446 350 455 328Q461 313 467 305Z" fill="#e0608a"/>
<path d="M488 305L494.5 306.5Q486 350 441 382.5L441 373Q476 345 488 305Z" fill="#6a0f47"/>
<path d="M495 306L508.7 305Q516 318 521.5 336Q524 344 525.3 351Q505 335 494 313Z" fill="#e0608a"/>
<path d="M494.5 306.5Q505 330 525 345L525.5 354.5Q503 338 493 316Z" fill="#6a0f47"/>
<path d="M476.3 212.5L492.8 212.5Q492.3 220 493.8 226L486 235L479 232L475.3 226Q476.8 220 476.3 212.5Z" fill="#fddccb"/><path d="M476.3 212.5L492.8 212.5Q492.4 217 492.8 221.5Q484 224.5 476 221.5Q476.6 217 476.3 212.5Z" fill="#f5cdb9"/>
<path d="M501 282L509.5 282L509 294L500 294Z" fill="#fddccb"/>
<path d="M453 238Q453.5 226 464 224.5L476 224L490 240L462 254L458.5 247Q453.5 245 453 238Z" fill="#6b69cf"/>
<path d="M504 228Q511 229 511.8 236Q513 260 509.8 282L501 282Q505 255 504 228Z" fill="#6b69cf"/>
<path d="M501.5 281.5L509.8 281.5L509.7 284L501.3 284Z" fill="#f0dc3c"/>
<path d="M459.5 252Q480 244 497 226.5L506 228.5Q511 232 510.5 240Q507 262 501 282Q498 292 496 303L466 303Q465.5 292 463.5 284Q459 268 459.5 252Z" fill="#e0608a"/>
<path d="M459 250Q480 242 496.5 225L501 226.5Q484 246 460 257Z" fill="#6a0f47"/>
<path d="M501 226.5L506.5 228.5Q507 250 500 275Q494 292 489 304L483.5 304Q491 288 496 270Q502 248 501 226.5Z" fill="#6a0f47"/>
<path d="M462.5 291.5Q485 297.5 509 291.5Q510 298 508.5 303Q485 307.5 463.5 303Q461.5 297 462.5 291.5Z" fill="#e6d63a"/>
<path d="M466 300L470 296.5L474 300L478 296.5L482 300L486 296.5L490 300L494 296.5L498 300L502 296.5L506 300" fill="none" stroke="#f6ee70" stroke-width="1.3"/>
<path d="M471 223.8Q472.5 233 479.5 237.5Q484 240.3 488 239.7Q494.8 236 494.6 225L491.7 225.7Q491 231.5 486.5 234Q482 233.5 479 230Q476.5 227 475.8 223.8Z" fill="#f4e63e" stroke="#dccb2a" stroke-width="0.4"/>
<circle cx="474.3" cy="227.5" r="0.55" fill="#48b030"/>
<circle cx="476.4" cy="231.2" r="0.55" fill="#48b030"/>
<circle cx="479.6" cy="234.2" r="0.55" fill="#48b030"/>
<circle cx="483.2" cy="236.3" r="0.55" fill="#48b030"/>
<ellipse cx="488.3" cy="236.2" rx="1.1" ry="2.3" fill="#cc1830"/>
<path d="M482.4 147.9Q490 147.2 496 149.6Q502.5 152 506.2 157Q510 162 511.3 168.3Q512.3 173 511.9 177.4Q511.5 182 509.6 185.3L506.8 190L500 172L480 174L474 197Q478 200 480 203.5Q483 206 482.4 208.5Q479 211.8 474.5 211.4Q470.5 210 467.7 206.9Q463.5 203 460.9 198.9Q457.5 193 456.3 187.6Q454.8 182 455 176.3Q455.2 171 456.3 166Q458.5 161 462 157Q466 152.5 471 150.2Q476.5 148.2 482.4 147.9Z" fill="#43341a"/>
<path d="M459 168Q464 158 474 153" fill="none" stroke="#66522c" stroke-width="0.7" stroke-opacity="0.75"/>
<path d="M457.5 176Q462 164 472 157.5Q480 153 490 153" fill="none" stroke="#66522c" stroke-width="0.7" stroke-opacity="0.75"/>
<path d="M462 160Q470 152 482 150.5Q494 150 502 155" fill="none" stroke="#66522c" stroke-width="0.7" stroke-opacity="0.75"/>
<path d="M458 190Q459 182 463 176" fill="none" stroke="#66522c" stroke-width="0.7" stroke-opacity="0.75"/>
<path d="M461 199Q460 192 464 186" fill="none" stroke="#66522c" stroke-width="0.7" stroke-opacity="0.75"/>
<path d="M500 156Q507 162 509 172" fill="none" stroke="#66522c" stroke-width="0.7" stroke-opacity="0.75"/>
<path d="M466 206Q464 201 466 196" fill="none" stroke="#66522c" stroke-width="0.7" stroke-opacity="0.75"/>
<path d="M478 152Q484 156 486 160" fill="none" stroke="#66522c" stroke-width="0.7" stroke-opacity="0.75"/>
<path d="M495 153Q493 157 494 160" fill="none" stroke="#66522c" stroke-width="0.7" stroke-opacity="0.75"/>
<path d="M486.9 166.2Q482 168.5 479 172.9Q475 177 473.3 181.9Q472 186 472.2 189.9Q472.6 193.5 473.9 196.7Q476 200.5 479 203.5Q482.5 206.5 486.9 208Q491 209.8 494.9 209.7Q498 209 500.5 206.9Q503.3 203.5 505.1 198.9Q506.8 194 507.7 188.7Q508 184 507.1 179.7Q506 175 503.9 171.7Q500.5 168 496.6 166.2Q491.5 164.8 486.9 166.2Z" fill="#fddccb"/>
<path d="M472.4 190.5Q468 186.6 464.4 188.6Q462 191 463.2 195Q465 199.5 469.6 200.4Q472.5 200.5 473.6 197.5Z" fill="#f7cdb8"/>
<path d="M485.5 165Q474 173.5 455.2 174" fill="none" stroke="#cdb41e" stroke-width="0.75"/>
<path d="M487 168Q476 181 455.6 181" fill="none" stroke="#cdb41e" stroke-width="0.75"/>
<path d="M496 165Q503 171.5 511.8 172.5" fill="none" stroke="#cdb41e" stroke-width="0.75"/>
<path d="M496.5 167.5Q502 175.5 511.2 178" fill="none" stroke="#cdb41e" stroke-width="0.75"/>
<circle cx="490.3" cy="158.3" r="3.1" fill="#f09a8c"/>
<circle cx="494.2" cy="161.1" r="3.1" fill="#f09a8c"/>
<circle cx="492.7" cy="165.7" r="3.1" fill="#f09a8c"/>
<circle cx="487.9" cy="165.7" r="3.1" fill="#f09a8c"/>
<circle cx="486.4" cy="161.1" r="3.1" fill="#f09a8c"/>
<circle cx="490.3" cy="162.4" r="2.5" fill="#d8422a"/><circle cx="490.3" cy="162.4" r="1" fill="#b82818"/>
<path d="M478.4 177.2Q480.5 174.6 484.5 174.2Q489 174.4 492.4 176.6Q488 175.8 484.5 175.8Q481 176 478.4 177.2Z" fill="#15132e" stroke="#15132e" stroke-width="0.5"/>
<path d="M497.2 176.6Q500 175 503 175.6Q505.4 176.4 506.8 178.4Q503.5 176.9 501 176.8Q499 176.9 497.2 176.6Z" fill="#15132e" stroke="#15132e" stroke-width="0.5"/>
<path d="M481.6 183.8Q486 180 491.4 183.6Q487 187 481.6 183.8Z" fill="#ffffff"/><circle cx="486.9" cy="183.7" r="2.45" fill="#352014"/><circle cx="486.2" cy="183" r="0.6" fill="#ffffff"/><path d="M480.2 184.2Q481.6 183.6 482.6 182.6Q486.4 179.6 491.6 183.4" fill="none" stroke="#14100c" stroke-width="1"/>
<path d="M496.6 184Q500.6 180.6 505.2 184Q500.8 187 496.6 184Z" fill="#ffffff"/><circle cx="500.5" cy="184" r="2.35" fill="#352014"/><circle cx="499.9" cy="183.3" r="0.6" fill="#ffffff"/><path d="M496.4 183.8Q500.6 180 505.4 183.6Q506 184.4 506.8 184.4" fill="none" stroke="#14100c" stroke-width="1"/>
<circle cx="494" cy="176.3" r="0.65" fill="#d8406a"/>
<path d="M494.9 190.4Q494 192.4 495.2 193" fill="none" stroke="#e2a48e" stroke-width="0.55"/>
<path d="M490.2 198.3Q493 196.8 495 197.7Q497 196.8 500 197.8Q497.4 201.9 494.6 201.6Q492 201.2 490.2 198.3Z" fill="#b83044"/><path d="M490.2 198.3Q495 199.4 500 197.8" fill="none" stroke="#8a1c30" stroke-width="0.4"/>
<path d="M473.6 199.3L475.6 206.8L470.6 206.9Z" fill="#d9c93a"/><path d="M471.6 203.3H474.9" stroke="#b8a620" stroke-width="0.5"/>
<circle cx="476.2" cy="200.2" r="1.9" fill="#fdf4ee" fill-opacity="0.85" stroke="#444444" stroke-width="0.55"/>
<rect x="454.5" y="146.4" width="58.5" height="63.9" fill="none" stroke="#4cb4f8" stroke-width="0.7" />
<rect x="452.5" y="212" width="60.5" height="91.7" fill="none" stroke="#4cb4f8" stroke-width="0.7" />
<rect x="378.4" y="216.8" width="25.0" height="142.5" fill="none" stroke="#4cb4f8" stroke-width="0.7" />
<rect x="550.6" y="222.2" width="55.0" height="137.1" fill="none" stroke="#4cb4f8" stroke-width="0.7" />
<rect x="472.5" y="223" width="22.1" height="17.0" fill="none" stroke="#4cb4f8" stroke-width="0.7" />
<rect x="406" y="304.8" width="144.6" height="192.5" fill="none" stroke="#4cb4f8" stroke-width="0.7" />
<rect x="386.5" y="463.3" width="19.5" height="40.3" fill="none" stroke="#4cb4f8" stroke-width="0.7" />
<rect x="550.6" y="468" width="26.1" height="29.3" fill="none" stroke="#4cb4f8" stroke-width="0.7" />
<path d="M525.3 213.5L544.3 212.5L545 290L528 290.8Z" fill="none" stroke="#4cb4f8" stroke-width="0.7"/>
<path d="M404 151.5H408M406 149.5V153.5" stroke="#222222" stroke-width="0.5"/>
<path d="M452.5 146.4H456.5M454.5 144.4V148.4" stroke="#222222" stroke-width="0.5"/>
<path d="M450.5 212H454.5M452.5 210V214" stroke="#222222" stroke-width="0.5"/>
<path d="M376.4 216.8H380.4M378.4 214.8V218.8" stroke="#222222" stroke-width="0.5"/>
<path d="M539 212.5H543M541 210.5V214.5" stroke="#222222" stroke-width="0.5"/>
<path d="M548.6 222.2H552.6M550.6 220.2V224.2" stroke="#222222" stroke-width="0.5"/>
<path d="M470.5 223H474.5M472.5 221V225" stroke="#222222" stroke-width="0.5"/>
<path d="M404 304.8H408M406 302.8V306.8" stroke="#222222" stroke-width="0.5"/>
<path d="M384.5 463.3H388.5M386.5 461.3V465.3" stroke="#222222" stroke-width="0.5"/>
<circle cx="401.5" cy="227.5" r="1.9" fill="#ffffff" fill-opacity="0.7" stroke="#333333" stroke-width="0.5"/>
<circle cx="483.5" cy="231.5" r="1.9" fill="#ffffff" fill-opacity="0.7" stroke="#333333" stroke-width="0.5"/>
<rect x="480.59999999999997" y="256.7" width="3.2" height="3.2" fill="#ffffff" fill-opacity="0.7" stroke="#333333" stroke-width="0.5"/>
<rect x="532.9" y="213.70000000000002" width="3.2" height="3.2" fill="#ffffff" fill-opacity="0.7" stroke="#333333" stroke-width="0.5"/>
<rect x="559.8" y="231.8" width="3.2" height="3.2" fill="#ffffff" fill-opacity="0.7" stroke="#333333" stroke-width="0.5"/>
<circle cx="397.5" cy="466" r="1.9" fill="#ffffff" fill-opacity="0.7" stroke="#333333" stroke-width="0.5"/><circle cx="524.1" cy="532.2" r="7.2" fill="#fbe070"/><path d="M520.4 530.3Q520.4 529.1 521.6 529.1H526.2Q527.4 529.1 527.4 530.3V533.2H528.5V534.8H527.4V536.6H525.5V534.8H522.3V536.6H520.4V534.8H519.3V533.2H520.4ZM522.3 531V533.2H525.5V531Z" fill="url(#lgA)" fill-rule="evenodd"/><path d="M528.6 526.6L529.8 527.4L528.4 529.2L527.4 529.4Z" fill="#d27af2"/><text x="535" y="535.2" font-family="Liberation Sans, sans-serif" font-weight="700" font-size="9" textLength="82" lengthAdjust="spacingAndGlyphs" fill="#ffffff">www.toonyug.com</text>
</g></svg>
<div style="left:482px;top:543.1px;width:481.5px;height:2.3px;background:#646464;border-radius:1.2px"></div>
<div style="left:1138.9px;top:75px;width:2.2px;height:362px;background:#686868;border-radius:1.1px"></div>
<div style="left:178.5px;top:549.5px;width:965.0px;height:9px;background:#2b2b2b;"></div>
<div style="left:178.5px;top:549.5px;width:28.5px;height:9px;background:#323232;"></div>
<div style="left:207.5px;top:549.5px;width:24px;height:9px;background:#2e2e2e;"></div>
<div class="t" style="top:547.80px;line-height:12px;font-size:6.2px;color:#f0f0f0;transform:scaleX(0.870);transform-origin:0 50%;font-weight:700;left:181.5px;">Timeline</div>
<div class="t" style="top:547.80px;line-height:12px;font-size:6.2px;color:#6c6c6c;transform:scaleX(0.870);transform-origin:0 50%;left:210px;">Output</div>
<div style="left:1136px;top:552.0px;width:5.4px;height:1.0px;background:#7e7e7e;"></div>
<div style="left:1136px;top:553.35px;width:5.4px;height:1.0px;background:#7e7e7e;"></div>
<div style="left:1136px;top:554.7px;width:5.4px;height:1.0px;background:#7e7e7e;"></div>
<div style="left:178.5px;top:582.7px;width:965.0px;height:0.9px;background:#2a2a2a;"></div>
<div style="left:336.3px;top:559px;width:0.9px;height:147px;background:#2a2a2a;"></div>
<div style="left:337px;top:583.6px;width:806.5px;height:20.4px;background:#303030;"></div>
<div style="left:336.5px;top:591.5px;width:0.8px;height:4px;background:#393939;"></div>
<div style="left:342.59px;top:591.5px;width:0.8px;height:4px;background:#393939;"></div>
<div style="left:348.69px;top:591.5px;width:0.8px;height:4px;background:#393939;"></div>
<div style="left:354.78px;top:591.5px;width:0.8px;height:4px;background:#393939;"></div>
<div style="left:360.88px;top:584px;width:0.8px;height:11.5px;background:#393939;"></div>
<div style="left:366.97px;top:591.5px;width:0.8px;height:4px;background:#393939;"></div>
<div style="left:373.06px;top:591.5px;width:0.8px;height:4px;background:#393939;"></div>
<div style="left:379.16px;top:591.5px;width:0.8px;height:4px;background:#393939;"></div>
<div style="left:385.25px;top:591.5px;width:0.8px;height:4px;background:#393939;"></div>
<div style="left:391.35px;top:584px;width:0.8px;height:11.5px;background:#393939;"></div>
<div style="left:397.44px;top:591.5px;width:0.8px;height:4px;background:#393939;"></div>
<div style="left:403.53px;top:591.5px;width:0.8px;height:4px;background:#393939;"></div>
<div style="left:409.63px;top:591.5px;width:0.8px;height:4px;background:#393939;"></div>
<div style="left:415.72px;top:591.5px;width:0.8px;height:4px;background:#393939;"></div>
<div style="left:421.82px;top:584px;width:0.8px;height:11.5px;background:#393939;"></div>
<div style="left:427.91px;top:591.5px;width:0.8px;height:4px;background:#393939;"></div>
<div style="left:434.0px;top:591.5px;width:0.8px;height:4px;background:#393939;"></div>
<div style="left:440.1px;top:591.5px;width:0.8px;height:4px;background:#393939;"></div>
<div style="left:446.19px;top:591.5px;width:0.8px;height:4px;background:#393939;"></div>
<div style="left:452.29px;top:584px;width:0.8px;height:11.5px;background:#393939;"></div>
<div style="left:458.38px;top:591.5px;width:0.8px;height:4px;background:#393939;"></div>
<div style="left:464.47px;top:591.5px;width:0.8px;height:4px;background:#393939;"></div>
<div style="left:470.57px;top:591.5px;width:0.8px;height:4px;background:#393939;"></div>
<div style="left:476.66px;top:591.5px;width:0.8px;height:4px;background:#393939;"></div>
<div style="left:482.76px;top:584px;width:0.8px;height:11.5px;background:#393939;"></div>
<div style="left:488.85px;top:591.5px;width:0.8px;height:4px;background:#393939;"></div>
<div style="left:494.94px;top:591.5px;width:0.8px;height:4px;background:#393939;"></div>
<div style="left:501.04px;top:591.5px;width:0.8px;height:4px;background:#393939;"></div>
<div style="left:507.13px;top:591.5px;width:0.8px;height:4px;background:#393939;"></div>
<div style="left:513.23px;top:584px;width:0.8px;height:11.5px;background:#393939;"></div>
<div style="left:519.32px;top:591.5px;width:0.8px;height:4px;background:#393939;"></div>
<div style="left:525.41px;top:591.5px;width:0.8px;height:4px;background:#393939;"></div>
<div style="left:531.51px;top:591.5px;width:0.8px;height:4px;background:#393939;"></div>
<div style="left:537.6px;top:591.5px;width:0.8px;height:4px;background:#393939;"></div>
<div style="left:543.7px;top:584px;width:0.8px;height:11.5px;background:#393939;"></div>
<div style="left:549.79px;top:591.5px;width:0.8px;height:4px;background:#393939;"></div>
<div style="left:555.88px;top:591.5px;width:0.8px;height:4px;background:#393939;"></div>
<div style="left:561.98px;top:591.5px;width:0.8px;height:4px;background:#393939;"></div>
<div style="left:568.07px;top:591.5px;width:0.8px;height:4px;background:#393939;"></div>
<div style="left:574.17px;top:584px;width:0.8px;height:11.5px;background:#393939;"></div>
<div style="left:580.26px;top:591.5px;width:0.8px;height:4px;background:#393939;"></div>
<div style="left:586.35px;top:591.5px;width:0.8px;height:4px;background:#393939;"></div>
<div style="left:592.45px;top:591.5px;width:0.8px;height:4px;background:#393939;"></div>
<div style="left:598.54px;top:591.5px;width:0.8px;height:4px;background:#393939;"></div>
<div style="left:604.64px;top:584px;width:0.8px;height:11.5px;background:#393939;"></div>
<div style="left:610.73px;top:591.5px;width:0.8px;height:4px;background:#393939;"></div>
<div style="left:616.82px;top:591.5px;width:0.8px;height:4px;background:#393939;"></div>
<div style="left:622.92px;top:591.5px;width:0.8px;height:4px;background:#393939;"></div>
<div style="left:629.01px;top:591.5px;width:0.8px;height:4px;background:#393939;"></div>
<div style="left:635.11px;top:584px;width:0.8px;height:11.5px;background:#393939;"></div>
<div style="left:641.2px;top:591.5px;width:0.8px;height:4px;background:#393939;"></div>
<div style="left:647.29px;top:591.5px;width:0.8px;height:4px;background:#393939;"></div>
<div style="left:653.39px;top:591.5px;width:0.8px;height:4px;background:#393939;"></div>
<div style="left:659.48px;top:591.5px;width:0.8px;height:4px;background:#393939;"></div>
<div style="left:665.58px;top:584px;width:0.8px;height:11.5px;background:#393939;"></div>
<div style="left:671.67px;top:591.5px;width:0.8px;height:4px;background:#393939;"></div>
<div style="left:677.76px;top:591.5px;width:0.8px;height:4px;background:#393939;"></div>
<div style="left:683.86px;top:591.5px;width:0.8px;height:4px;background:#393939;"></div>
<div style="left:689.95px;top:591.5px;width:0.8px;height:4px;background:#393939;"></div>
<div style="left:696.05px;top:584px;width:0.8px;height:11.5px;background:#393939;"></div>
<div style="left:702.14px;top:591.5px;width:0.8px;height:4px;background:#393939;"></div>
<div style="left:708.23px;top:591.5px;width:0.8px;height:4px;background:#393939;"></div>
<div style="left:714.33px;top:591.5px;width:0.8px;height:4px;background:#393939;"></div>
<div style="left:720.42px;top:591.5px;width:0.8px;height:4px;background:#393939;"></div>
<div style="left:726.52px;top:584px;width:0.8px;height:11.5px;background:#393939;"></div>
<div style="left:732.61px;top:591.5px;width:0.8px;height:4px;background:#393939;"></div>
<div style="left:738.7px;top:591.5px;width:0.8px;height:4px;background:#393939;"></div>
<div style="left:744.8px;top:591.5px;width:0.8px;height:4px;background:#393939;"></div>
<div style="left:750.89px;top:591.5px;width:0.8px;height:4px;background:#393939;"></div>
<div style="left:756.99px;top:584px;width:0.8px;height:11.5px;background:#393939;"></div>
<div style="left:763.08px;top:591.5px;width:0.8px;height:4px;background:#393939;"></div>
<div style="left:769.17px;top:591.5px;width:0.8px;height:4px;background:#393939;"></div>
<div style="left:775.27px;top:591.5px;width:0.8px;height:4px;background:#393939;"></div>
<div style="left:781.36px;top:591.5px;width:0.8px;height:4px;background:#393939;"></div>
<div style="left:787.46px;top:584px;width:0.8px;height:11.5px;background:#393939;"></div>
<div style="left:793.55px;top:591.5px;width:0.8px;height:4px;background:#393939;"></div>
<div style="left:799.64px;top:591.5px;width:0.8px;height:4px;background:#393939;"></div>
<div style="left:805.74px;top:591.5px;width:0.8px;height:4px;background:#393939;"></div>
<div style="left:811.83px;top:591.5px;width:0.8px;height:4px;background:#393939;"></div>
<div style="left:817.93px;top:584px;width:0.8px;height:11.5px;background:#393939;"></div>
<div style="left:824.02px;top:591.5px;width:0.8px;height:4px;background:#393939;"></div>
<div style="left:830.11px;top:591.5px;width:0.8px;height:4px;background:#393939;"></div>
<div style="left:836.21px;top:591.5px;width:0.8px;height:4px;background:#393939;"></div>
<div style="left:842.3px;top:591.5px;width:0.8px;height:4px;background:#393939;"></div>
<div style="left:848.4px;top:584px;width:0.8px;height:11.5px;background:#393939;"></div>
<div style="left:854.49px;top:591.5px;width:0.8px;height:4px;background:#393939;"></div>
<div style="left:860.58px;top:591.5px;width:0.8px;height:4px;background:#393939;"></div>
<div style="left:866.68px;top:591.5px;width:0.8px;height:4px;background:#393939;"></div>
<div style="left:872.77px;top:591.5px;width:0.8px;height:4px;background:#393939;"></div>
<div style="left:878.87px;top:584px;width:0.8px;height:11.5px;background:#393939;"></div>
<div style="left:884.96px;top:591.5px;width:0.8px;height:4px;background:#393939;"></div>
<div style="left:891.05px;top:591.5px;width:0.8px;height:4px;background:#393939;"></div>
<div style="left:897.15px;top:591.5px;width:0.8px;height:4px;background:#393939;"></div>
<div style="left:903.24px;top:591.5px;width:0.8px;height:4px;background:#393939;"></div>
<div style="left:909.34px;top:584px;width:0.8px;height:11.5px;background:#393939;"></div>
<div style="left:915.43px;top:591.5px;width:0.8px;height:4px;background:#393939;"></div>
<div style="left:921.52px;top:591.5px;width:0.8px;height:4px;background:#393939;"></div>
<div style="left:927.62px;top:591.5px;width:0.8px;height:4px;background:#393939;"></div>
<div style="left:933.71px;top:591.5px;width:0.8px;height:4px;background:#393939;"></div>
<div style="left:939.81px;top:584px;width:0.8px;height:11.5px;background:#393939;"></div>
<div style="left:945.9px;top:591.5px;width:0.8px;height:4px;background:#393939;"></div>
<div style="left:951.99px;top:591.5px;width:0.8px;height:4px;background:#393939;"></div>
<div style="left:958.09px;top:591.5px;width:0.8px;height:4px;background:#393939;"></div>
<div style="left:964.18px;top:591.5px;width:0.8px;height:4px;background:#393939;"></div>
<div style="left:970.28px;top:584px;width:0.8px;height:11.5px;background:#393939;"></div>
<div style="left:976.37px;top:591.5px;width:0.8px;height:4px;background:#393939;"></div>
<div style="left:982.46px;top:591.5px;width:0.8px;height:4px;background:#393939;"></div>
<div style="left:988.56px;top:591.5px;width:0.8px;height:4px;background:#393939;"></div>
<div style="left:994.65px;top:591.5px;width:0.8px;height:4px;background:#393939;"></div>
<div style="left:1000.75px;top:584px;width:0.8px;height:11.5px;background:#393939;"></div>
<div style="left:1006.84px;top:591.5px;width:0.8px;height:4px;background:#393939;"></div>
<div style="left:1012.93px;top:591.5px;width:0.8px;height:4px;background:#393939;"></div>
<div style="left:1019.03px;top:591.5px;width:0.8px;height:4px;background:#393939;"></div>
<div style="left:1025.12px;top:591.5px;width:0.8px;height:4px;background:#393939;"></div>
<div style="left:1031.22px;top:584px;width:0.8px;height:11.5px;background:#393939;"></div>
<div style="left:1037.31px;top:591.5px;width:0.8px;height:4px;background:#393939;"></div>
<div style="left:1043.4px;top:591.5px;width:0.8px;height:4px;background:#393939;"></div>
<div style="left:1049.5px;top:591.5px;width:0.8px;height:4px;background:#393939;"></div>
<div style="left:1055.59px;top:591.5px;width:0.8px;height:4px;background:#393939;"></div>
<div style="left:1061.69px;top:584px;width:0.8px;height:11.5px;background:#393939;"></div>
<div style="left:1067.78px;top:591.5px;width:0.8px;height:4px;background:#393939;"></div>
<div style="left:1073.87px;top:591.5px;width:0.8px;height:4px;background:#393939;"></div>
<div style="left:1079.97px;top:591.5px;width:0.8px;height:4px;background:#393939;"></div>
<div style="left:1086.06px;top:591.5px;width:0.8px;height:4px;background:#393939;"></div>
<div style="left:1092.16px;top:584px;width:0.8px;height:11.5px;background:#393939;"></div>
<div style="left:1098.25px;top:591.5px;width:0.8px;height:4px;background:#393939;"></div>
<div style="left:1104.34px;top:591.5px;width:0.8px;height:4px;background:#393939;"></div>
<div style="left:1110.44px;top:591.5px;width:0.8px;height:4px;background:#393939;"></div>
<div style="left:1116.53px;top:591.5px;width:0.8px;height:4px;background:#393939;"></div>
<div style="left:1122.63px;top:584px;width:0.8px;height:11.5px;background:#393939;"></div>
<div style="left:1128.72px;top:591.5px;width:0.8px;height:4px;background:#393939;"></div>
<div style="left:1134.81px;top:591.5px;width:0.8px;height:4px;background:#393939;"></div>
<div style="left:1140.91px;top:591.5px;width:0.8px;height:4px;background:#393939;"></div>
<div class="t" style="top:593.00px;line-height:12px;font-size:6.3px;color:#8c8c8c;transform:scaleX(0.870);transform-origin:0 50%;left:362.1px;">5</div>
<div class="t" style="top:593.00px;line-height:12px;font-size:6.3px;color:#8c8c8c;transform:scaleX(0.870);transform-origin:0 50%;left:392.5px;">10</div>
<div class="t" style="top:593.00px;line-height:12px;font-size:6.3px;color:#8c8c8c;transform:scaleX(0.870);transform-origin:0 50%;left:423.0px;">15</div>
<div class="t" style="top:593.00px;line-height:12px;font-size:6.3px;color:#8c8c8c;transform:scaleX(0.870);transform-origin:0 50%;left:453.5px;">20</div>
<div class="t" style="top:593.00px;line-height:12px;font-size:6.3px;color:#8c8c8c;transform:scaleX(0.870);transform-origin:0 50%;left:484.0px;">25</div>
<div class="t" style="top:593.00px;line-height:12px;font-size:6.3px;color:#8c8c8c;transform:scaleX(0.870);transform-origin:0 50%;left:514.4px;">30</div>
<div class="t" style="top:593.00px;line-height:12px;font-size:6.3px;color:#8c8c8c;transform:scaleX(0.870);transform-origin:0 50%;left:544.9px;">35</div>
<div class="t" style="top:593.00px;line-height:12px;font-size:6.3px;color:#8c8c8c;transform:scaleX(0.870);transform-origin:0 50%;left:575.4px;">40</div>
<div class="t" style="top:593.00px;line-height:12px;font-size:6.3px;color:#8c8c8c;transform:scaleX(0.870);transform-origin:0 50%;left:605.8px;">45</div>
<div class="t" style="top:593.00px;line-height:12px;font-size:6.3px;color:#8c8c8c;transform:scaleX(0.870);transform-origin:0 50%;left:636.3px;">50</div>
<div class="t" style="top:593.00px;line-height:12px;font-size:6.3px;color:#8c8c8c;transform:scaleX(0.870);transform-origin:0 50%;left:666.8px;">55</div>
<div class="t" style="top:593.00px;line-height:12px;font-size:6.3px;color:#8c8c8c;transform:scaleX(0.870);transform-origin:0 50%;left:697.2px;">60</div>
<div class="t" style="top:593.00px;line-height:12px;font-size:6.3px;color:#8c8c8c;transform:scaleX(0.870);transform-origin:0 50%;left:727.7px;">65</div>
<div class="t" style="top:593.00px;line-height:12px;font-size:6.3px;color:#8c8c8c;transform:scaleX(0.870);transform-origin:0 50%;left:758.2px;">70</div>
<div class="t" style="top:593.00px;line-height:12px;font-size:6.3px;color:#8c8c8c;transform:scaleX(0.870);transform-origin:0 50%;left:788.7px;">75</div>
<div class="t" style="top:593.00px;line-height:12px;font-size:6.3px;color:#8c8c8c;transform:scaleX(0.870);transform-origin:0 50%;left:819.1px;">80</div>
<div class="t" style="top:593.00px;line-height:12px;font-size:6.3px;color:#8c8c8c;transform:scaleX(0.870);transform-origin:0 50%;left:849.6px;">85</div>
<div class="t" style="top:593.00px;line-height:12px;font-size:6.3px;color:#8c8c8c;transform:scaleX(0.870);transform-origin:0 50%;left:880.1px;">90</div>
<div class="t" style="top:593.00px;line-height:12px;font-size:6.3px;color:#8c8c8c;transform:scaleX(0.870);transform-origin:0 50%;left:910.5px;">95</div>
<div class="t" style="top:593.00px;line-height:12px;font-size:6.3px;color:#8c8c8c;transform:scaleX(0.870);transform-origin:0 50%;left:941.0px;">100</div>
<div class="t" style="top:593.00px;line-height:12px;font-size:6.3px;color:#8c8c8c;transform:scaleX(0.870);transform-origin:0 50%;left:971.5px;">105</div>
<div class="t" style="top:593.00px;line-height:12px;font-size:6.3px;color:#8c8c8c;transform:scaleX(0.870);transform-origin:0 50%;left:1001.9px;">110</div>
<div class="t" style="top:593.00px;line-height:12px;font-size:6.3px;color:#8c8c8c;transform:scaleX(0.870);transform-origin:0 50%;left:1032.4px;">115</div>
<div class="t" style="top:593.00px;line-height:12px;font-size:6.3px;color:#8c8c8c;transform:scaleX(0.870);transform-origin:0 50%;left:1062.9px;">120</div>
<div class="t" style="top:593.00px;line-height:12px;font-size:6.3px;color:#8c8c8c;transform:scaleX(0.870);transform-origin:0 50%;left:1093.4px;">125</div>
<div class="t" style="top:593.00px;line-height:12px;font-size:6.3px;color:#8c8c8c;transform:scaleX(0.870);transform-origin:0 50%;left:1123.8px;">130</div>
<div class="t" style="top:581.30px;line-height:12px;font-size:4.6px;color:#7c7c7c;transform:scaleX(0.870);transform-origin:0 50%;left:514.7px;">1s</div>
<div class="t" style="top:581.30px;line-height:12px;font-size:4.6px;color:#7c7c7c;transform:scaleX(0.870);transform-origin:0 50%;left:697.5px;">2s</div>
<div class="t" style="top:581.30px;line-height:12px;font-size:4.6px;color:#7c7c7c;transform:scaleX(0.870);transform-origin:0 50%;left:880.4px;">3s</div>
<div class="t" style="top:581.30px;line-height:12px;font-size:4.6px;color:#7c7c7c;transform:scaleX(0.870);transform-origin:0 50%;left:1063.2px;">4s</div>
<div style="left:178.5px;top:604.0px;width:965.0px;height:94.29999999999995px;overflow:hidden">
<div style="left:0px;top:0.0px;width:157.8px;height:9.73px;background:#35608f;"></div>
<div style="left:0px;top:8.93px;width:157.8px;height:0.8px;background:#2f5580;"></div>
<svg style="left:14.5px;top:1.40px" width="7" height="7" viewBox="0 0 7 7"><path d="M0.3 0.3H6V6H2.6L0.3 3.8Z" fill="#7c7c7c"/><path d="M0.3 0.7H5.6V6" fill="none" stroke="#d4d4d4" stroke-width="0.9"/><path d="M0.5 0.5V3.7L2.7 5.8H5.8" fill="none" stroke="#bdbdbd" stroke-width="0.6"/></svg>
<div class="t" style="top:-0.20px;line-height:12px;font-size:6.4px;color:#ffffff;transform:scaleX(0.830);transform-origin:0 50%;left:26.19999999999999px;">face1</div>
<div style="left:117.60000000000002px;top:1.4px;width:3.4px;height:6.6px;background:#a233d2;"></div>
<div style="left:158.5px;top:0.0px;width:608.9px;height:9.73px;background:#969696;"></div>
<div style="left:158.5px;top:0.0px;width:608.9px;height:1.1px;background:#9f9f9f;background-image:repeating-linear-gradient(90deg,rgba(0,0,0,0) 0,rgba(0,0,0,0) 5.094px,rgba(128,128,128,1) 5.094px,rgba(128,128,128,1) 6.094px);background-position:-0.50px 0;"></div>
<div style="left:158.5px;top:8.63px;width:608.9px;height:1.1px;background:#505050;"></div>
<div style="left:767.4px;top:0.0px;width:190.10000000000002px;height:9.73px;background:#2e2e2e;"></div>
<div style="left:767.4px;top:8.93px;width:190.10000000000002px;height:0.8px;background:#292929;"></div>
<div style="left:765.1px;top:4.2px;width:1.1px;height:3.0px;background:#222222;border-radius:0.5px"></div>
<div style="left:0px;top:9.73px;width:157.8px;height:9.73px;background:#323232;"></div>
<div style="left:0px;top:18.66px;width:157.8px;height:0.8px;background:#2a2a2a;"></div>
<svg style="left:14.5px;top:11.13px" width="7" height="7" viewBox="0 0 7 7"><path d="M0.3 0.3H6V6H2.6L0.3 3.8Z" fill="#7c7c7c"/><path d="M0.3 0.7H5.6V6" fill="none" stroke="#d4d4d4" stroke-width="0.9"/><path d="M0.5 0.5V3.7L2.7 5.8H5.8" fill="none" stroke="#bdbdbd" stroke-width="0.6"/></svg>
<div class="t" style="top:9.53px;line-height:12px;font-size:6.4px;color:#d6d6d6;transform:scaleX(0.830);transform-origin:0 50%;left:26.19999999999999px;">right_hand</div>
<div style="left:117.60000000000002px;top:11.13px;width:3.4px;height:6.6px;background:#ff4fff;"></div>
<div style="left:158.5px;top:9.73px;width:608.9px;height:9.73px;background:#969696;"></div>
<div style="left:158.5px;top:9.73px;width:608.9px;height:1.1px;background:#9f9f9f;background-image:repeating-linear-gradient(90deg,rgba(0,0,0,0) 0,rgba(0,0,0,0) 5.094px,rgba(128,128,128,1) 5.094px,rgba(128,128,128,1) 6.094px);background-position:-0.50px 0;"></div>
<div style="left:158.5px;top:18.36px;width:608.9px;height:1.1px;background:#505050;"></div>
<div style="left:767.4px;top:9.73px;width:190.10000000000002px;height:9.73px;background:#2e2e2e;"></div>
<div style="left:767.4px;top:18.66px;width:190.10000000000002px;height:0.8px;background:#292929;"></div>
<div style="left:765.1px;top:13.93px;width:1.1px;height:3.0px;background:#222222;border-radius:0.5px"></div>
<div style="left:0px;top:19.46px;width:157.8px;height:9.73px;background:#323232;"></div>
<div style="left:0px;top:28.39px;width:157.8px;height:0.8px;background:#2a2a2a;"></div>
<svg style="left:14.5px;top:20.86px" width="7" height="7" viewBox="0 0 7 7"><path d="M0.3 0.3H6V6H2.6L0.3 3.8Z" fill="#7c7c7c"/><path d="M0.3 0.7H5.6V6" fill="none" stroke="#d4d4d4" stroke-width="0.9"/><path d="M0.5 0.5V3.7L2.7 5.8H5.8" fill="none" stroke="#bdbdbd" stroke-width="0.6"/></svg>
<div class="t" style="top:19.26px;line-height:12px;font-size:6.4px;color:#d6d6d6;transform:scaleX(0.830);transform-origin:0 50%;left:26.19999999999999px;">choti</div>
<div style="left:117.60000000000002px;top:20.86px;width:3.4px;height:6.6px;background:#ff8200;"></div>
<div style="left:158.5px;top:19.46px;width:608.9px;height:9.73px;background:#969696;"></div>
<div style="left:158.5px;top:19.46px;width:608.9px;height:1.1px;background:#9f9f9f;background-image:repeating-linear-gradient(90deg,rgba(0,0,0,0) 0,rgba(0,0,0,0) 5.094px,rgba(128,128,128,1) 5.094px,rgba(128,128,128,1) 6.094px);background-position:-0.50px 0;"></div>
<div style="left:158.5px;top:28.09px;width:608.9px;height:1.1px;background:#505050;"></div>
<div style="left:767.4px;top:19.46px;width:190.10000000000002px;height:9.73px;background:#2e2e2e;"></div>
<div style="left:767.4px;top:28.39px;width:190.10000000000002px;height:0.8px;background:#292929;"></div>
<div style="left:765.1px;top:23.66px;width:1.1px;height:3.0px;background:#222222;border-radius:0.5px"></div>
<div style="left:0px;top:29.19px;width:157.8px;height:9.73px;background:#323232;"></div>
<div style="left:0px;top:38.12px;width:157.8px;height:0.8px;background:#2a2a2a;"></div>
<svg style="left:14.5px;top:30.59px" width="7" height="7" viewBox="0 0 7 7"><path d="M0.3 0.3H6V6H2.6L0.3 3.8Z" fill="#7c7c7c"/><path d="M0.3 0.7H5.6V6" fill="none" stroke="#d4d4d4" stroke-width="0.9"/><path d="M0.5 0.5V3.7L2.7 5.8H5.8" fill="none" stroke="#bdbdbd" stroke-width="0.6"/></svg>
<div class="t" style="top:28.99px;line-height:12px;font-size:6.4px;color:#d6d6d6;transform:scaleX(0.830);transform-origin:0 50%;left:26.19999999999999px;">necklace</div>
<div style="left:117.60000000000002px;top:30.59px;width:3.4px;height:6.6px;background:#a233d2;"></div>
<div style="left:158.5px;top:29.19px;width:608.9px;height:9.73px;background:#969696;"></div>
<div style="left:158.5px;top:29.19px;width:608.9px;height:1.1px;background:#9f9f9f;background-image:repeating-linear-gradient(90deg,rgba(0,0,0,0) 0,rgba(0,0,0,0) 5.094px,rgba(128,128,128,1) 5.094px,rgba(128,128,128,1) 6.094px);background-position:-0.50px 0;"></div>
<div style="left:158.5px;top:37.82px;width:608.9px;height:1.1px;background:#505050;"></div>
<div style="left:767.4px;top:29.19px;width:190.10000000000002px;height:9.73px;background:#2e2e2e;"></div>
<div style="left:767.4px;top:38.12px;width:190.10000000000002px;height:0.8px;background:#292929;"></div>
<div style="left:765.1px;top:33.39px;width:1.1px;height:3.0px;background:#222222;border-radius:0.5px"></div>
<div style="left:0px;top:38.92px;width:157.8px;height:9.73px;background:#323232;"></div>
<div style="left:0px;top:47.85px;width:157.8px;height:0.8px;background:#2a2a2a;"></div>
<svg style="left:14.5px;top:40.32px" width="7" height="7" viewBox="0 0 7 7"><path d="M0.3 0.3H6V6H2.6L0.3 3.8Z" fill="#7c7c7c"/><path d="M0.3 0.7H5.6V6" fill="none" stroke="#d4d4d4" stroke-width="0.9"/><path d="M0.5 0.5V3.7L2.7 5.8H5.8" fill="none" stroke="#bdbdbd" stroke-width="0.6"/></svg>
<div class="t" style="top:38.72px;line-height:12px;font-size:6.4px;color:#d6d6d6;transform:scaleX(0.830);transform-origin:0 50%;left:26.19999999999999px;">upper_body</div>
<div style="left:117.60000000000002px;top:40.32px;width:3.4px;height:6.6px;background:#009b9b;"></div>
<div style="left:158.5px;top:38.92px;width:608.9px;height:9.73px;background:#969696;"></div>
<div style="left:158.5px;top:38.92px;width:608.9px;height:1.1px;background:#9f9f9f;background-image:repeating-linear-gradient(90deg,rgba(0,0,0,0) 0,rgba(0,0,0,0) 5.094px,rgba(128,128,128,1) 5.094px,rgba(128,128,128,1) 6.094px);background-position:-0.50px 0;"></div>
<div style="left:158.5px;top:47.55px;width:608.9px;height:1.1px;background:#505050;"></div>
<div style="left:767.4px;top:38.92px;width:190.10000000000002px;height:9.73px;background:#2e2e2e;"></div>
<div style="left:767.4px;top:47.85px;width:190.10000000000002px;height:0.8px;background:#292929;"></div>
<div style="left:765.1px;top:43.12px;width:1.1px;height:3.0px;background:#222222;border-radius:0.5px"></div>
<div style="left:0px;top:48.65px;width:157.8px;height:9.73px;background:#323232;"></div>
<div style="left:0px;top:57.58px;width:157.8px;height:0.8px;background:#2a2a2a;"></div>
<svg style="left:14.5px;top:50.05px" width="7" height="7" viewBox="0 0 7 7"><path d="M0.3 0.3H6V6H2.6L0.3 3.8Z" fill="#7c7c7c"/><path d="M0.3 0.7H5.6V6" fill="none" stroke="#d4d4d4" stroke-width="0.9"/><path d="M0.5 0.5V3.7L2.7 5.8H5.8" fill="none" stroke="#bdbdbd" stroke-width="0.6"/></svg>
<div class="t" style="top:48.45px;line-height:12px;font-size:6.4px;color:#d6d6d6;transform:scaleX(0.830);transform-origin:0 50%;left:26.19999999999999px;">gown</div>
<div style="left:117.60000000000002px;top:50.05px;width:3.4px;height:6.6px;background:#ff0000;"></div>
<div style="left:158.5px;top:48.65px;width:608.9px;height:9.73px;background:#969696;"></div>
<div style="left:158.5px;top:48.65px;width:608.9px;height:1.1px;background:#9f9f9f;background-image:repeating-linear-gradient(90deg,rgba(0,0,0,0) 0,rgba(0,0,0,0) 5.094px,rgba(128,128,128,1) 5.094px,rgba(128,128,128,1) 6.094px);background-position:-0.50px 0;"></div>
<div style="left:158.5px;top:57.28px;width:608.9px;height:1.1px;background:#505050;"></div>
<div style="left:767.4px;top:48.65px;width:190.10000000000002px;height:9.73px;background:#2e2e2e;"></div>
<div style="left:767.4px;top:57.58px;width:190.10000000000002px;height:0.8px;background:#292929;"></div>
<div style="left:765.1px;top:52.85px;width:1.1px;height:3.0px;background:#222222;border-radius:0.5px"></div>
<div style="left:0px;top:58.38px;width:157.8px;height:9.73px;background:#323232;"></div>
<div style="left:0px;top:67.31px;width:157.8px;height:0.8px;background:#2a2a2a;"></div>
<svg style="left:14.5px;top:59.78px" width="7" height="7" viewBox="0 0 7 7"><path d="M0.3 0.3H6V6H2.6L0.3 3.8Z" fill="#7c7c7c"/><path d="M0.3 0.7H5.6V6" fill="none" stroke="#d4d4d4" stroke-width="0.9"/><path d="M0.5 0.5V3.7L2.7 5.8H5.8" fill="none" stroke="#bdbdbd" stroke-width="0.6"/></svg>
<div class="t" style="top:58.18px;line-height:12px;font-size:6.4px;color:#d6d6d6;transform:scaleX(0.830);transform-origin:0 50%;left:26.19999999999999px;">left_hand</div>
<div style="left:117.60000000000002px;top:59.78px;width:3.4px;height:6.6px;background:#7fa000;"></div>
<div style="left:158.5px;top:58.38px;width:608.9px;height:9.73px;background:#969696;"></div>
<div style="left:158.5px;top:58.38px;width:608.9px;height:1.1px;background:#9f9f9f;background-image:repeating-linear-gradient(90deg,rgba(0,0,0,0) 0,rgba(0,0,0,0) 5.094px,rgba(128,128,128,1) 5.094px,rgba(128,128,128,1) 6.094px);background-position:-0.50px 0;"></div>
<div style="left:158.5px;top:67.01px;width:608.9px;height:1.1px;background:#505050;"></div>
<div style="left:767.4px;top:58.38px;width:190.10000000000002px;height:9.73px;background:#2e2e2e;"></div>
<div style="left:767.4px;top:67.31px;width:190.10000000000002px;height:0.8px;background:#292929;"></div>
<div style="left:765.1px;top:62.58px;width:1.1px;height:3.0px;background:#222222;border-radius:0.5px"></div>
<div style="left:0px;top:68.11px;width:157.8px;height:9.73px;background:#323232;"></div>
<div style="left:0px;top:77.04px;width:157.8px;height:0.8px;background:#2a2a2a;"></div>
<svg style="left:14.5px;top:69.51px" width="7" height="7" viewBox="0 0 7 7"><path d="M0.3 0.3H6V6H2.6L0.3 3.8Z" fill="#7c7c7c"/><path d="M0.3 0.7H5.6V6" fill="none" stroke="#d4d4d4" stroke-width="0.9"/><path d="M0.5 0.5V3.7L2.7 5.8H5.8" fill="none" stroke="#bdbdbd" stroke-width="0.6"/></svg>
<div class="t" style="top:67.91px;line-height:12px;font-size:6.4px;color:#d6d6d6;transform:scaleX(0.830);transform-origin:0 50%;left:26.19999999999999px;">back_hair</div>
<div style="left:117.60000000000002px;top:69.51px;width:3.4px;height:6.6px;background:#ff5050;"></div>
<div style="left:158.5px;top:68.11px;width:608.9px;height:9.73px;background:#969696;"></div>
<div style="left:158.5px;top:68.11px;width:608.9px;height:1.1px;background:#9f9f9f;background-image:repeating-linear-gradient(90deg,rgba(0,0,0,0) 0,rgba(0,0,0,0) 5.094px,rgba(128,128,128,1) 5.094px,rgba(128,128,128,1) 6.094px);background-position:-0.50px 0;"></div>
<div style="left:158.5px;top:76.74px;width:608.9px;height:1.1px;background:#505050;"></div>
<div style="left:767.4px;top:68.11px;width:190.10000000000002px;height:9.73px;background:#2e2e2e;"></div>
<div style="left:767.4px;top:77.04px;width:190.10000000000002px;height:0.8px;background:#292929;"></div>
<div style="left:765.1px;top:72.31px;width:1.1px;height:3.0px;background:#222222;border-radius:0.5px"></div>
<div style="left:0px;top:77.84px;width:157.8px;height:9.73px;background:#323232;"></div>
<div style="left:0px;top:86.77px;width:157.8px;height:0.8px;background:#2a2a2a;"></div>
<svg style="left:14.5px;top:79.24px" width="7" height="7" viewBox="0 0 7 7"><path d="M0.3 0.3H6V6H2.6L0.3 3.8Z" fill="#7c7c7c"/><path d="M0.3 0.7H5.6V6" fill="none" stroke="#d4d4d4" stroke-width="0.9"/><path d="M0.5 0.5V3.7L2.7 5.8H5.8" fill="none" stroke="#bdbdbd" stroke-width="0.6"/></svg>
<div class="t" style="top:77.64px;line-height:12px;font-size:6.4px;color:#d6d6d6;transform:scaleX(0.830);transform-origin:0 50%;left:26.19999999999999px;">right_foot</div>
<div style="left:117.60000000000002px;top:79.24px;width:3.4px;height:6.6px;background:#00ffff;"></div>
<div style="left:158.5px;top:77.84px;width:608.9px;height:9.73px;background:#969696;"></div>
<div style="left:158.5px;top:77.84px;width:608.9px;height:1.1px;background:#9f9f9f;background-image:repeating-linear-gradient(90deg,rgba(0,0,0,0) 0,rgba(0,0,0,0) 5.094px,rgba(128,128,128,1) 5.094px,rgba(128,128,128,1) 6.094px);background-position:-0.50px 0;"></div>
<div style="left:158.5px;top:86.47px;width:608.9px;height:1.1px;background:#505050;"></div>
<div style="left:767.4px;top:77.84px;width:190.10000000000002px;height:9.73px;background:#2e2e2e;"></div>
<div style="left:767.4px;top:86.77px;width:190.10000000000002px;height:0.8px;background:#292929;"></div>
<div style="left:765.1px;top:82.04px;width:1.1px;height:3.0px;background:#222222;border-radius:0.5px"></div>
<div style="left:0px;top:87.57px;width:157.8px;height:9.73px;background:#323232;"></div>
<div style="left:0px;top:96.5px;width:157.8px;height:0.8px;background:#2a2a2a;"></div>
<svg style="left:14.5px;top:88.97px" width="7" height="7" viewBox="0 0 7 7"><path d="M0.3 0.3H6V6H2.6L0.3 3.8Z" fill="#7c7c7c"/><path d="M0.3 0.7H5.6V6" fill="none" stroke="#d4d4d4" stroke-width="0.9"/><path d="M0.5 0.5V3.7L2.7 5.8H5.8" fill="none" stroke="#bdbdbd" stroke-width="0.6"/></svg>
<div class="t" style="top:87.37px;line-height:12px;font-size:6.4px;color:#d6d6d6;transform:scaleX(0.830);transform-origin:0 50%;left:26.19999999999999px;">left_foot</div>
<div style="left:117.60000000000002px;top:88.97px;width:3.4px;height:6.6px;background:#a233d2;"></div>
<div style="left:158.5px;top:87.57px;width:608.9px;height:9.73px;background:#969696;"></div>
<div style="left:158.5px;top:87.57px;width:608.9px;height:1.1px;background:#9f9f9f;background-image:repeating-linear-gradient(90deg,rgba(0,0,0,0) 0,rgba(0,0,0,0) 5.094px,rgba(128,128,128,1) 5.094px,rgba(128,128,128,1) 6.094px);background-position:-0.50px 0;"></div>
<div style="left:158.5px;top:96.2px;width:608.9px;height:1.1px;background:#505050;"></div>
<div style="left:767.4px;top:87.57px;width:190.10000000000002px;height:9.73px;background:#2e2e2e;"></div>
<div style="left:767.4px;top:96.5px;width:190.10000000000002px;height:0.8px;background:#292929;"></div>
<div style="left:765.1px;top:91.77px;width:1.1px;height:3.0px;background:#222222;border-radius:0.5px"></div>
<div style="left:791.78px;top:0px;width:6.094px;height:94.29999999999995px;background:rgba(255,255,255,0.06);"></div>
<div style="left:822.25px;top:0px;width:6.094px;height:94.29999999999995px;background:rgba(255,255,255,0.06);"></div>
<div style="left:852.72px;top:0px;width:6.094px;height:94.29999999999995px;background:rgba(255,255,255,0.06);"></div>
<div style="left:883.19px;top:0px;width:6.094px;height:94.29999999999995px;background:rgba(255,255,255,0.06);"></div>
<div style="left:913.66px;top:0px;width:6.094px;height:94.29999999999995px;background:rgba(255,255,255,0.06);"></div>
<div style="left:944.13px;top:0px;width:6.094px;height:94.29999999999995px;background:rgba(255,255,255,0.06);"></div>
<div style="left:767.40px;top:0;width:190.10px;height:94.29999999999995px;background-image:repeating-linear-gradient(90deg,rgba(0,0,0,0) 0,rgba(0,0,0,0) 5.294px,rgba(20,20,20,0.32) 5.294px,rgba(20,20,20,0.32) 6.094px);"></div>
<div style="left:158.5px;top:0px;width:5.7px;height:94.29999999999995px;background:rgba(120,180,255,0.5);"></div>
<div style="left:160.89999999999998px;top:0px;width:0.9px;height:94.29999999999995px;background:#3b86e0;"></div>
<svg style="left:159.5px;top:4.50px" width="3.6" height="3.6" viewBox="0 0 3.6 3.6"><circle cx="1.8" cy="1.8" r="1.25" fill="#4a78b0" stroke="#081422" stroke-width="0.9"/></svg>
<svg style="left:159.5px;top:14.23px" width="3.6" height="3.6" viewBox="0 0 3.6 3.6"><circle cx="1.8" cy="1.8" r="1.25" fill="#4a78b0" stroke="#081422" stroke-width="0.9"/></svg>
<svg style="left:159.5px;top:23.96px" width="3.6" height="3.6" viewBox="0 0 3.6 3.6"><circle cx="1.8" cy="1.8" r="1.25" fill="#4a78b0" stroke="#081422" stroke-width="0.9"/></svg>
<svg style="left:159.5px;top:33.69px" width="3.6" height="3.6" viewBox="0 0 3.6 3.6"><circle cx="1.8" cy="1.8" r="1.25" fill="#4a78b0" stroke="#081422" stroke-width="0.9"/></svg>
<svg style="left:159.5px;top:43.42px" width="3.6" height="3.6" viewBox="0 0 3.6 3.6"><circle cx="1.8" cy="1.8" r="1.25" fill="#4a78b0" stroke="#081422" stroke-width="0.9"/></svg>
<svg style="left:159.5px;top:53.15px" width="3.6" height="3.6" viewBox="0 0 3.6 3.6"><circle cx="1.8" cy="1.8" r="1.25" fill="#4a78b0" stroke="#081422" stroke-width="0.9"/></svg>
<svg style="left:159.5px;top:62.88px" width="3.6" height="3.6" viewBox="0 0 3.6 3.6"><circle cx="1.8" cy="1.8" r="1.25" fill="#4a78b0" stroke="#081422" stroke-width="0.9"/></svg>
<svg style="left:159.5px;top:72.61px" width="3.6" height="3.6" viewBox="0 0 3.6 3.6"><circle cx="1.8" cy="1.8" r="1.25" fill="#4a78b0" stroke="#081422" stroke-width="0.9"/></svg>
<svg style="left:159.5px;top:82.34px" width="3.6" height="3.6" viewBox="0 0 3.6 3.6"><circle cx="1.8" cy="1.8" r="1.25" fill="#4a78b0" stroke="#081422" stroke-width="0.9"/></svg>
<svg style="left:159.5px;top:92.07px" width="3.6" height="3.6" viewBox="0 0 3.6 3.6"><circle cx="1.8" cy="1.8" r="1.25" fill="#4a78b0" stroke="#081422" stroke-width="0.9"/></svg>
</div>
<svg style="left:337px;top:583.6px" width="6" height="20" viewBox="0 0 6 20"><path d="M0 0.8Q0 0 0.8 0H4.9Q5.7 0 5.7 0.8V18L2.85 20L0 18Z" fill="#3a7fd0"/></svg>
<div style="left:1139.2px;top:604.5px;width:1.8px;height:84px;background:#666666;border-radius:1px"></div>
<div style="left:337px;top:698.3px;width:806.5px;height:7.7px;background:#2b2b2b;"></div>
<div style="left:337.4px;top:701.4px;width:143px;height:2.3px;background:#5c5c5c;border-radius:1.2px"></div>
<div class="t" style="top:566.00px;line-height:12px;font-size:7.4px;color:#868686;transform:scaleX(1.026);transform-origin:0 50%;left:350.2px;">30.00</div>
<div class="t" style="top:563.80px;line-height:12px;font-size:4.8px;color:#6a6a6a;transform:scaleX(0.793);transform-origin:0 50%;left:370.6px;">FPS</div>
<div class="t" style="top:566.00px;line-height:12px;font-size:7.4px;color:#e6e6e6;transform:scaleX(0.870);transform-origin:0 50%;font-weight:700;left:391px;">1</div>
<div class="t" style="top:563.80px;line-height:12px;font-size:4.8px;color:#8a8a8a;transform:scaleX(0.870);transform-origin:0 50%;left:397.2px;">F</div>
<svg style="left:188.3px;top:566.6px;" width="9" height="10" viewBox="0 0 9 10"><path d="M4.3 0.4L8.2 2.3L4.3 4.2L0.4 2.3Z" fill="#d6d6d6"/><path d="M0.4 4.4L4.3 6.3L8.2 4.4" fill="none" stroke="#d6d6d6" stroke-width="1"/><path d="M0.4 6.5L4.3 8.4L8.2 6.5" fill="none" stroke="#d6d6d6" stroke-width="1"/></svg>
<svg style="left:286px;top:568.8px;" width="9" height="6" viewBox="0 0 9 6"><rect x="0.2" y="0.4" width="5" height="4.6" rx="0.5" fill="#4c4c4c"/><path d="M5.4 2.7L8 0.8V4.6Z" fill="#4c4c4c"/></svg>
<svg style="left:301.8px;top:567.2px;" width="10" height="9" viewBox="0 0 10 9"><rect x="3" y="0.2" width="3" height="2.4" fill="#d6d6d6"/><rect x="0.2" y="5" width="3" height="2.4" fill="#d6d6d6"/><rect x="5.6" y="5" width="3" height="2.4" fill="#d6d6d6"/><path d="M4.5 2.6V3.8M1.7 5V3.8H7.1V5" fill="none" stroke="#d6d6d6" stroke-width="0.8"/><path d="M9.4 7V8.6H7.8Z" fill="#bdbdbd"/></svg>
<svg style="left:318px;top:567.2px;" width="9" height="8.5" viewBox="0 0 9 8.5"><path d="M0.6 0.2V7.6H8" fill="none" stroke="#d6d6d6" stroke-width="0.9"/><path d="M2 6Q3.4 3 5 4Q6 4.6 7.6 2.2" fill="none" stroke="#d6d6d6" stroke-width="0.9"/><path d="M6 1.6H8V3.6" fill="none" stroke="#d6d6d6" stroke-width="0.8"/></svg>
<svg style="left:189px;top:590px;" width="8" height="8" viewBox="0 0 8 8"><rect x="0.4" y="0.4" width="6.6" height="6.6" fill="none" stroke="#d6d6d6" stroke-width="0.8"/><path d="M3.7 2V5.4M2 3.7H5.4" stroke="#d6d6d6" stroke-width="0.8"/></svg>
<svg style="left:204.4px;top:590px;" width="9.5" height="8" viewBox="0 0 9.5 8"><path d="M0.3 1.2Q0.3 0.6 0.9 0.6H3.4L4.2 1.6H8.2Q8.8 1.6 8.8 2.2V6.8Q8.8 7.4 8.2 7.4H0.9Q0.3 7.4 0.3 6.8Z" fill="#dcdcdc"/></svg>
<svg style="left:220.8px;top:589.6px;" width="8" height="9" viewBox="0 0 8 9"><path d="M0.4 1.8H7.4" stroke="#d6d6d6" stroke-width="0.9"/><path d="M2.8 1.6V0.6H5V1.6" fill="none" stroke="#d6d6d6" stroke-width="0.8"/><path d="M1 2.6L1.5 8.4H6.3L6.8 2.6Z" fill="#d6d6d6"/><path d="M2.9 3.6V7.4M3.9 3.6V7.4M4.9 3.6V7.4" stroke="#323232" stroke-width="0.4"/></svg>
<div style="left:285.2px;top:593.2px;width:1.7px;height:1.7px;background:#e8e8e8;border-radius:1px"></div>
<div style="left:295px;top:589.6px;width:4.2px;height:8.6px;background:rgba(0,0,0,0);border:0.9px solid #dcdcdc;border-radius:0.6px"></div>
<svg style="left:305.8px;top:590px;" width="9.5" height="8" viewBox="0 0 9.5 8"><path d="M0.4 3.8Q4.4 -0.6 8.6 3.8Q4.4 8.2 0.4 3.8Z" fill="none" stroke="#d6d6d6" stroke-width="0.8"/><circle cx="4.5" cy="3.8" r="1.3" fill="#d6d6d6"/><path d="M1 0.2L8 7.6" stroke="#d6d6d6" stroke-width="0.9"/></svg>
<svg style="left:320px;top:589.2px;" width="7.5" height="9.5" viewBox="0 0 7.5 9.5"><path d="M1.6 4V2.6Q1.6 0.6 3.6 0.6Q5.6 0.6 5.6 2.6V4" fill="none" stroke="#d6d6d6" stroke-width="1"/><rect x="0.4" y="3.8" width="6.4" height="5" rx="0.6" fill="#d6d6d6"/><rect x="3.1" y="5.2" width="1" height="2" fill="#323232"/></svg>
<div style="left:696.6px;top:563.7px;width:16.2px;height:16px;background:#3a3a3a;border:0.8px solid #565656;border-radius:1.5px"></div>
<svg style="left:648.2px;top:567px;" width="9" height="9" viewBox="0 0 9 9"><rect x="1.4" y="1.4" width="6" height="6" fill="#d6d6d6"/><circle cx="4.4" cy="5.4" r="1" fill="#323232"/></svg>
<svg style="left:665.4px;top:567px;" width="9" height="9" viewBox="0 0 9 9"><rect x="1.4" y="1.4" width="6" height="6" fill="#d6d6d6"/><circle cx="4.4" cy="4.8" r="1.5" fill="none" stroke="#323232" stroke-width="0.7"/></svg>
<svg style="left:682.6px;top:567px;" width="9" height="9" viewBox="0 0 9 9"><rect x="1.4" y="1.4" width="6" height="6" fill="#d6d6d6"/><rect x="4.8" y="2.4" width="1.8" height="4" fill="#323232"/></svg>
<svg style="left:700.1px;top:567px;" width="9" height="9" viewBox="0 0 9 9"><rect x="0.8" y="2" width="5.6" height="5.6" fill="#d6d6d6"/><rect x="2.4" y="3.6" width="2.4" height="2.4" fill="#3a3a3a"/><path d="M7 0.4V4M5.8 1.6L7 0.4L8.2 1.6" fill="none" stroke="#d6d6d6" stroke-width="0.7"/><path d="M8.6 6.6V8.2H7Z" fill="#bdbdbd"/></svg>
<svg style="left:717.6px;top:567px;" width="9" height="9" viewBox="0 0 9 9"><rect x="0.6" y="1" width="5.6" height="5.6" fill="#d6d6d6"/><circle cx="6.2" cy="6" r="2.4" fill="#d6d6d6" stroke="#323232" stroke-width="0.6"/><path d="M5 6H7.4" stroke="#323232" stroke-width="0.8"/></svg>
<div style="left:731.4px;top:564px;width:0.8px;height:15.5px;background:#484848;"></div>
<svg style="left:736.5px;top:567px;" width="9" height="9" viewBox="0 0 9 9"><circle cx="3" cy="4.4" r="2.6" fill="none" stroke="#9a9a9a" stroke-width="0.8"/><circle cx="5.4" cy="4.4" r="2.8" fill="#d6d6d6"/><path d="M9 6.8V8.4H7.4Z" fill="#bdbdbd"/></svg>
<svg style="left:754.0px;top:567px;" width="9" height="9" viewBox="0 0 9 9"><rect x="3.4" y="1" width="4.6" height="4.6" fill="#d6d6d6"/><rect x="1" y="3.4" width="4.6" height="4.6" fill="#d6d6d6" stroke="#323232" stroke-width="0.6"/><rect x="2.4" y="4.8" width="1.8" height="1.8" fill="#323232"/></svg>
<svg style="left:770.9px;top:567px;" width="9" height="9" viewBox="0 0 9 9"><path d="M3.6 1.6L0.8 4.4L3.6 7.2M5.4 1.6L8.2 4.4L5.4 7.2" fill="none" stroke="#d6d6d6" stroke-width="1"/><circle cx="4.5" cy="4.4" r="0.9" fill="#d6d6d6"/></svg>
<svg style="left:788.2px;top:567px;" width="9" height="9" viewBox="0 0 9 9"><path d="M1 5.4Q1 3 3.4 3H6M4.8 1.6L6.4 3L4.8 4.4M8 3.6Q8 6 5.6 6H3" fill="none" stroke="#4a4a4a" stroke-width="0.9"/></svg>
<div style="left:802.4px;top:564px;width:0.8px;height:15.5px;background:#484848;"></div>
<svg style="left:807.3px;top:567px;" width="9" height="9" viewBox="0 0 9 9"><path d="M0.8 3.4V7.4H8V3.4" fill="none" stroke="#d6d6d6" stroke-width="0.9"/><path d="M2.4 4.6V2.2H6.2" fill="none" stroke="#d6d6d6" stroke-width="0.9"/><path d="M5.4 0.4L7.6 2.2L5.4 4Z" fill="#d6d6d6"/></svg>
<svg style="left:824.8px;top:567px;" width="9" height="9" viewBox="0 0 9 9"><path d="M1.6 1L7.6 4.4L1.6 7.8Z" fill="#d6d6d6"/></svg>
<svg style="left:1059px;top:566.8px;" width="10" height="9" viewBox="0 0 10 9"><path d="M2.4 3.2H6Q8.4 3.2 8.4 5.2Q8.4 6.6 6.6 6.8" fill="none" stroke="#d6d6d6" stroke-width="0.9"/><path d="M3.4 1.2L1 3.2L3.4 5.2Z" fill="#d6d6d6"/><path d="M0.8 8.2H8.6" stroke="#d6d6d6" stroke-width="0.9"/></svg>
<div style="left:1074px;top:571px;width:12.5px;height:1px;background:#dcdcdc;"></div>
<div style="left:1093px;top:571.2px;width:27.5px;height:0.7px;background:#555555;"></div>
<svg style="left:1086.8px;top:568.2px;" width="7" height="7" viewBox="0 0 7 7"><circle cx="3.3" cy="3.3" r="2.4" fill="#323232" stroke="#e0e0e0" stroke-width="0.9"/></svg>
<svg style="left:1125px;top:568px;" width="10" height="6.5" viewBox="0 0 10 6.5"><path d="M0.2 6L3 1.6L5 4.6L6.6 2.2L9.4 6Z" fill="#d6d6d6"/></svg>
<div style="left:1145.5px;top:20px;width:154.5px;height:6px;background:#2b2b2b;"></div>
<svg style="left:1292.8px;top:21.4px;" width="6" height="4" viewBox="0 0 6 4"><path d="M0.4 0.4L2.2 1.8L0.4 3.2ZM2.8 0.4L4.6 1.8L2.8 3.2Z" fill="#9a9a9a"/><rect x="4.8" y="0.3" width="0.7" height="3" fill="#9a9a9a"/></svg>
<div style="left:1145.5px;top:26px;width:154.5px;height:8.7px;background:#2b2b2b;"></div>
<div style="left:1221px;top:26px;width:25.5px;height:8.7px;background:#323232;"></div>
<div class="t" style="top:24.40px;line-height:12px;font-size:6.0px;color:#6e6e6e;transform:scaleX(0.805);transform-origin:0 50%;left:1149px;">Assets</div>
<div class="t" style="top:24.40px;line-height:12px;font-size:6.0px;color:#6e6e6e;transform:scaleX(0.878);transform-origin:0 50%;left:1172px;">Properties</div>
<div class="t" style="top:24.40px;line-height:12px;font-size:6.0px;color:#6e6e6e;transform:scaleX(0.974);transform-origin:0 50%;left:1204.5px;">Align</div>
<div class="t" style="top:24.40px;line-height:12px;font-size:6.0px;color:#f2f2f2;transform:scaleX(0.836);transform-origin:0 50%;font-weight:700;left:1225.3px;">Library</div>
<div style="left:1167.5px;top:26.5px;width:0.7px;height:8px;background:#303030;"></div>
<div style="left:1200px;top:26.5px;width:0.7px;height:8px;background:#303030;"></div>
<div style="left:1221px;top:26.5px;width:0.7px;height:8px;background:#303030;"></div>
<div style="left:1293px;top:28.6px;width:5.4px;height:1.0px;background:#7e7e7e;"></div>
<div style="left:1293px;top:29.950000000000003px;width:5.4px;height:1.0px;background:#7e7e7e;"></div>
<div style="left:1293px;top:31.3px;width:5.4px;height:1.0px;background:#7e7e7e;"></div>
<div style="left:1148px;top:37.4px;width:122px;height:9.8px;background:#2c2c2c;border:0.8px solid #424242;border-radius:2px"></div>
<div class="t" style="top:36.60px;line-height:12px;font-size:6.8px;color:#e6e6e6;transform:scaleX(0.988);transform-origin:0 50%;left:1154px;">background file.fla</div>
<svg style="left:1258.3px;top:40.6px;" width="6.5" height="4" viewBox="0 0 6.5 4"><path d="M0.6 0.6L3 3L5.4 0.6" fill="none" stroke="#ececec" stroke-width="1.1"/></svg>
<svg style="left:1274.6px;top:40.4px;" width="9.5" height="5" viewBox="0 0 9.5 5"><path d="M0.4 2.4H5.6" stroke="#e0e0e0" stroke-width="1"/><circle cx="6.8" cy="2.4" r="2" fill="#e0e0e0"/></svg>
<svg style="left:1287.6px;top:39px;" width="9" height="8" viewBox="0 0 9 8"><rect x="0.5" y="0.5" width="5" height="5.4" fill="#8a8a8a" stroke="#cfcfcf" stroke-width="0.7"/><rect x="2.8" y="2" width="5" height="5.4" fill="#5a5a5a" stroke="#cfcfcf" stroke-width="0.7"/></svg>
<div style="left:1145.5px;top:49px;width:154.5px;height:0.9px;background:#2a2a2a;"></div>
<div class="t" style="top:120.00px;line-height:12px;font-size:5.0px;color:#c8c8c8;transform:scaleX(0.920);transform-origin:0 50%;left:1147px;">1072 items</div>
<div style="left:1230px;top:121.5px;width:68px;height:9px;background:#262626;border:0.8px solid #3e3e3e;border-radius:1.5px"></div>
<svg style="left:1232px;top:123px;" width="6" height="6" viewBox="0 0 6 6"><circle cx="3.4" cy="2.2" r="1.7" fill="none" stroke="#d0d0d0" stroke-width="0.8"/><path d="M2.2 3.4L0.5 5.2" stroke="#d0d0d0" stroke-width="0.9"/></svg>
<div style="left:1145.5px;top:133px;width:154.5px;height:0.8px;background:#2a2a2a;"></div>
<div style="left:1145.5px;top:146.9px;width:154.5px;height:0.9px;background:#2a2a2a;"></div>
<div class="t" style="top:133.90px;line-height:12px;font-size:5.8px;color:#d2d2d2;transform:scaleX(0.840);transform-origin:0 50%;left:1148px;">Name</div>
<svg style="left:1163.5px;top:137.2px;" width="6" height="5.5" viewBox="0 0 6 5.5"><path d="M2.9 5.2V1M0.6 2.8Q2.9 -0.6 5.2 2.8" fill="none" stroke="#d0d0d0" stroke-width="0.9"/></svg>
<div style="left:1262.8px;top:134px;width:0.8px;height:12.5px;background:#2a2a2a;"></div>
<div class="t" style="top:133.90px;line-height:12px;font-size:5.8px;color:#d2d2d2;transform:scaleX(0.861);transform-origin:0 50%;left:1265.5px;">Linkage</div>
<div style="left:1146.2px;top:148px;width:0.8px;height:549px;background:#3e3e3e;"></div>
<div style="left:1294.6px;top:148.4px;width:2px;height:93.5px;background:#626262;border-radius:1px"></div>
<svg style="left:1157.4px;top:152.1px;" width="9.5" height="8" viewBox="0 0 9.5 8"><path d="M0.3 4.6L4.9 0.3L6 1.4V7.2L4.2 8.2Z" fill="#c4c4c4"/><path d="M1.6 3.6L5 0.9M2.4 4.4L5.4 1.9" stroke="#8a8a8a" stroke-width="0.5"/><rect x="5.3" y="2.9" width="3.4" height="4.3" fill="#dedede"/><circle cx="4.1" cy="5.8" r="1.75" fill="#d8d8d8"/><circle cx="4.1" cy="5.8" r="0.95" fill="#262626"/></svg>
<div class="t" style="top:151.00px;line-height:12px;font-size:6.7px;color:#d8d8d8;transform:scaleX(0.950);transform-origin:0 50%;left:1169px;">back dupataa</div>
<svg style="left:1157.4px;top:168.86px;" width="9.5" height="8" viewBox="0 0 9.5 8"><path d="M0.3 4.6L4.9 0.3L6 1.4V7.2L4.2 8.2Z" fill="#c4c4c4"/><path d="M1.6 3.6L5 0.9M2.4 4.4L5.4 1.9" stroke="#8a8a8a" stroke-width="0.5"/><rect x="5.3" y="2.9" width="3.4" height="4.3" fill="#dedede"/><circle cx="4.1" cy="5.8" r="1.75" fill="#d8d8d8"/><circle cx="4.1" cy="5.8" r="0.95" fill="#262626"/></svg>
<div class="t" style="top:167.76px;line-height:12px;font-size:6.7px;color:#d8d8d8;transform:scaleX(0.950);transform-origin:0 50%;left:1169px;">back dupatta1</div>
<svg style="left:1157.4px;top:185.62px;" width="9.5" height="8" viewBox="0 0 9.5 8"><path d="M0.3 4.6L4.9 0.3L6 1.4V7.2L4.2 8.2Z" fill="#c4c4c4"/><path d="M1.6 3.6L5 0.9M2.4 4.4L5.4 1.9" stroke="#8a8a8a" stroke-width="0.5"/><rect x="5.3" y="2.9" width="3.4" height="4.3" fill="#dedede"/><circle cx="4.1" cy="5.8" r="1.75" fill="#d8d8d8"/><circle cx="4.1" cy="5.8" r="0.95" fill="#262626"/></svg>
<div class="t" style="top:184.52px;line-height:12px;font-size:6.7px;color:#d8d8d8;transform:scaleX(0.950);transform-origin:0 50%;left:1169px;">back dupatta2</div>
<svg style="left:1157.4px;top:202.38px;" width="9.5" height="8" viewBox="0 0 9.5 8"><path d="M0.3 4.6L4.9 0.3L6 1.4V7.2L4.2 8.2Z" fill="#c4c4c4"/><path d="M1.6 3.6L5 0.9M2.4 4.4L5.4 1.9" stroke="#8a8a8a" stroke-width="0.5"/><rect x="5.3" y="2.9" width="3.4" height="4.3" fill="#dedede"/><circle cx="4.1" cy="5.8" r="1.75" fill="#d8d8d8"/><circle cx="4.1" cy="5.8" r="0.95" fill="#262626"/></svg>
<div class="t" style="top:201.28px;line-height:12px;font-size:6.7px;color:#d8d8d8;transform:scaleX(0.950);transform-origin:0 50%;left:1169px;">back hair</div>
<svg style="left:1157.4px;top:219.14px;" width="9.5" height="8" viewBox="0 0 9.5 8"><path d="M0.3 4.6L4.9 0.3L6 1.4V7.2L4.2 8.2Z" fill="#c4c4c4"/><path d="M1.6 3.6L5 0.9M2.4 4.4L5.4 1.9" stroke="#8a8a8a" stroke-width="0.5"/><rect x="5.3" y="2.9" width="3.4" height="4.3" fill="#dedede"/><circle cx="4.1" cy="5.8" r="1.75" fill="#d8d8d8"/><circle cx="4.1" cy="5.8" r="0.95" fill="#262626"/></svg>
<div class="t" style="top:218.04px;line-height:12px;font-size:6.7px;color:#d8d8d8;transform:scaleX(0.950);transform-origin:0 50%;left:1169px;">back hair1</div>
<svg style="left:1157.4px;top:235.9px;" width="9.5" height="8" viewBox="0 0 9.5 8"><path d="M0.3 4.6L4.9 0.3L6 1.4V7.2L4.2 8.2Z" fill="#c4c4c4"/><path d="M1.6 3.6L5 0.9M2.4 4.4L5.4 1.9" stroke="#8a8a8a" stroke-width="0.5"/><rect x="5.3" y="2.9" width="3.4" height="4.3" fill="#dedede"/><circle cx="4.1" cy="5.8" r="1.75" fill="#d8d8d8"/><circle cx="4.1" cy="5.8" r="0.95" fill="#262626"/></svg>
<div class="t" style="top:234.80px;line-height:12px;font-size:6.7px;color:#d8d8d8;transform:scaleX(0.950);transform-origin:0 50%;left:1169px;">back hair2</div>
<svg style="left:1157.4px;top:252.66px;" width="9.5" height="8" viewBox="0 0 9.5 8"><path d="M0.3 4.6L4.9 0.3L6 1.4V7.2L4.2 8.2Z" fill="#c4c4c4"/><path d="M1.6 3.6L5 0.9M2.4 4.4L5.4 1.9" stroke="#8a8a8a" stroke-width="0.5"/><rect x="5.3" y="2.9" width="3.4" height="4.3" fill="#dedede"/><circle cx="4.1" cy="5.8" r="1.75" fill="#d8d8d8"/><circle cx="4.1" cy="5.8" r="0.95" fill="#262626"/></svg>
<div class="t" style="top:251.56px;line-height:12px;font-size:6.7px;color:#d8d8d8;transform:scaleX(0.950);transform-origin:0 50%;left:1169px;">back saree</div>
<svg style="left:1157.4px;top:269.42px;" width="9.5" height="8" viewBox="0 0 9.5 8"><path d="M0.3 4.6L4.9 0.3L6 1.4V7.2L4.2 8.2Z" fill="#c4c4c4"/><path d="M1.6 3.6L5 0.9M2.4 4.4L5.4 1.9" stroke="#8a8a8a" stroke-width="0.5"/><rect x="5.3" y="2.9" width="3.4" height="4.3" fill="#dedede"/><circle cx="4.1" cy="5.8" r="1.75" fill="#d8d8d8"/><circle cx="4.1" cy="5.8" r="0.95" fill="#262626"/></svg>
<div class="t" style="top:268.32px;line-height:12px;font-size:6.7px;color:#d8d8d8;transform:scaleX(0.950);transform-origin:0 50%;left:1169px;">back saree</div>
<svg style="left:1157.4px;top:286.18px;" width="9.5" height="8" viewBox="0 0 9.5 8"><path d="M0.3 4.6L4.9 0.3L6 1.4V7.2L4.2 8.2Z" fill="#c4c4c4"/><path d="M1.6 3.6L5 0.9M2.4 4.4L5.4 1.9" stroke="#8a8a8a" stroke-width="0.5"/><rect x="5.3" y="2.9" width="3.4" height="4.3" fill="#dedede"/><circle cx="4.1" cy="5.8" r="1.75" fill="#d8d8d8"/><circle cx="4.1" cy="5.8" r="0.95" fill="#262626"/></svg>
<div class="t" style="top:285.08px;line-height:12px;font-size:6.7px;color:#d8d8d8;transform:scaleX(0.950);transform-origin:0 50%;left:1169px;">back saree pallu</div>
<svg style="left:1157.4px;top:302.94px;" width="9.5" height="8" viewBox="0 0 9.5 8"><path d="M0.3 4.6L4.9 0.3L6 1.4V7.2L4.2 8.2Z" fill="#c4c4c4"/><path d="M1.6 3.6L5 0.9M2.4 4.4L5.4 1.9" stroke="#8a8a8a" stroke-width="0.5"/><rect x="5.3" y="2.9" width="3.4" height="4.3" fill="#dedede"/><circle cx="4.1" cy="5.8" r="1.75" fill="#d8d8d8"/><circle cx="4.1" cy="5.8" r="0.95" fill="#262626"/></svg>
<div class="t" style="top:301.84px;line-height:12px;font-size:6.7px;color:#d8d8d8;transform:scaleX(0.950);transform-origin:0 50%;left:1169px;">back saree up</div>
<svg style="left:1157.6px;top:320.3px;" width="8.5" height="7" viewBox="0 0 8.5 7"><rect x="0.4" y="0.6" width="7.6" height="6" fill="#e4e4e4"/><path d="M1 6L3 3.4L4.4 5L5.6 4L7.4 6Z" fill="#323232"/><circle cx="2.4" cy="2.2" r="0.8" fill="#323232"/></svg>
<div class="t" style="top:318.60px;line-height:12px;font-size:6.7px;color:#d8d8d8;transform:scaleX(0.950);transform-origin:0 50%;left:1169px;">Background Cover.png</div>
<svg style="left:1157.4px;top:336.46px;" width="9.5" height="8" viewBox="0 0 9.5 8"><path d="M0.3 4.6L4.9 0.3L6 1.4V7.2L4.2 8.2Z" fill="#c4c4c4"/><path d="M1.6 3.6L5 0.9M2.4 4.4L5.4 1.9" stroke="#8a8a8a" stroke-width="0.5"/><rect x="5.3" y="2.9" width="3.4" height="4.3" fill="#dedede"/><circle cx="4.1" cy="5.8" r="1.75" fill="#d8d8d8"/><circle cx="4.1" cy="5.8" r="0.95" fill="#262626"/></svg>
<div class="t" style="top:335.36px;line-height:12px;font-size:6.7px;color:#d8d8d8;transform:scaleX(0.950);transform-origin:0 50%;left:1169px;">bag</div>
<svg style="left:1157.4px;top:353.22px;" width="9.5" height="8" viewBox="0 0 9.5 8"><path d="M0.3 4.6L4.9 0.3L6 1.4V7.2L4.2 8.2Z" fill="#c4c4c4"/><path d="M1.6 3.6L5 0.9M2.4 4.4L5.4 1.9" stroke="#8a8a8a" stroke-width="0.5"/><rect x="5.3" y="2.9" width="3.4" height="4.3" fill="#dedede"/><circle cx="4.1" cy="5.8" r="1.75" fill="#d8d8d8"/><circle cx="4.1" cy="5.8" r="0.95" fill="#262626"/></svg>
<div class="t" style="top:352.12px;line-height:12px;font-size:6.7px;color:#d8d8d8;transform:scaleX(0.950);transform-origin:0 50%;left:1169px;">bag patti</div>
<svg style="left:1157.4px;top:369.98px;" width="9.5" height="8" viewBox="0 0 9.5 8"><path d="M0.3 4.6L4.9 0.3L6 1.4V7.2L4.2 8.2Z" fill="#c4c4c4"/><path d="M1.6 3.6L5 0.9M2.4 4.4L5.4 1.9" stroke="#8a8a8a" stroke-width="0.5"/><rect x="5.3" y="2.9" width="3.4" height="4.3" fill="#dedede"/><circle cx="4.1" cy="5.8" r="1.75" fill="#d8d8d8"/><circle cx="4.1" cy="5.8" r="0.95" fill="#262626"/></svg>
<div class="t" style="top:368.88px;line-height:12px;font-size:6.7px;color:#d8d8d8;transform:scaleX(0.950);transform-origin:0 50%;left:1169px;">belt</div>
<svg style="left:1157.4px;top:386.74px;" width="9.5" height="8" viewBox="0 0 9.5 8"><path d="M0.3 4.6L4.9 0.3L6 1.4V7.2L4.2 8.2Z" fill="#c4c4c4"/><path d="M1.6 3.6L5 0.9M2.4 4.4L5.4 1.9" stroke="#8a8a8a" stroke-width="0.5"/><rect x="5.3" y="2.9" width="3.4" height="4.3" fill="#dedede"/><circle cx="4.1" cy="5.8" r="1.75" fill="#d8d8d8"/><circle cx="4.1" cy="5.8" r="0.95" fill="#262626"/></svg>
<div class="t" style="top:385.64px;line-height:12px;font-size:6.7px;color:#d8d8d8;transform:scaleX(0.950);transform-origin:0 50%;left:1169px;">belt or chunni</div>
<svg style="left:1157.4px;top:403.5px;" width="9.5" height="8" viewBox="0 0 9.5 8"><path d="M0.3 4.6L4.9 0.3L6 1.4V7.2L4.2 8.2Z" fill="#c4c4c4"/><path d="M1.6 3.6L5 0.9M2.4 4.4L5.4 1.9" stroke="#8a8a8a" stroke-width="0.5"/><rect x="5.3" y="2.9" width="3.4" height="4.3" fill="#dedede"/><circle cx="4.1" cy="5.8" r="1.75" fill="#d8d8d8"/><circle cx="4.1" cy="5.8" r="0.95" fill="#262626"/></svg>
<div class="t" style="top:402.40px;line-height:12px;font-size:6.7px;color:#d8d8d8;transform:scaleX(0.950);transform-origin:0 50%;left:1169px;">blouse</div>
<svg style="left:1157.4px;top:420.26px;" width="9.5" height="8" viewBox="0 0 9.5 8"><path d="M0.3 4.6L4.9 0.3L6 1.4V7.2L4.2 8.2Z" fill="#c4c4c4"/><path d="M1.6 3.6L5 0.9M2.4 4.4L5.4 1.9" stroke="#8a8a8a" stroke-width="0.5"/><rect x="5.3" y="2.9" width="3.4" height="4.3" fill="#dedede"/><circle cx="4.1" cy="5.8" r="1.75" fill="#d8d8d8"/><circle cx="4.1" cy="5.8" r="0.95" fill="#262626"/></svg>
<div class="t" style="top:419.16px;line-height:12px;font-size:6.7px;color:#d8d8d8;transform:scaleX(0.950);transform-origin:0 50%;left:1169px;">blouse part</div>
<svg style="left:1157.4px;top:437.02px;" width="9.5" height="8" viewBox="0 0 9.5 8"><path d="M0.3 4.6L4.9 0.3L6 1.4V7.2L4.2 8.2Z" fill="#c4c4c4"/><path d="M1.6 3.6L5 0.9M2.4 4.4L5.4 1.9" stroke="#8a8a8a" stroke-width="0.5"/><rect x="5.3" y="2.9" width="3.4" height="4.3" fill="#dedede"/><circle cx="4.1" cy="5.8" r="1.75" fill="#d8d8d8"/><circle cx="4.1" cy="5.8" r="0.95" fill="#262626"/></svg>
<div class="t" style="top:435.92px;line-height:12px;font-size:6.7px;color:#d8d8d8;transform:scaleX(0.950);transform-origin:0 50%;left:1169px;">blouse part inside</div>
<svg style="left:1157.4px;top:453.78px;" width="9.5" height="8" viewBox="0 0 9.5 8"><path d="M0.3 4.6L4.9 0.3L6 1.4V7.2L4.2 8.2Z" fill="#c4c4c4"/><path d="M1.6 3.6L5 0.9M2.4 4.4L5.4 1.9" stroke="#8a8a8a" stroke-width="0.5"/><rect x="5.3" y="2.9" width="3.4" height="4.3" fill="#dedede"/><circle cx="4.1" cy="5.8" r="1.75" fill="#d8d8d8"/><circle cx="4.1" cy="5.8" r="0.95" fill="#262626"/></svg>
<div class="t" style="top:452.68px;line-height:12px;font-size:6.7px;color:#d8d8d8;transform:scaleX(0.950);transform-origin:0 50%;left:1169px;">body</div>
<svg style="left:1157.4px;top:470.54px;" width="9.5" height="8" viewBox="0 0 9.5 8"><path d="M0.3 4.6L4.9 0.3L6 1.4V7.2L4.2 8.2Z" fill="#c4c4c4"/><path d="M1.6 3.6L5 0.9M2.4 4.4L5.4 1.9" stroke="#8a8a8a" stroke-width="0.5"/><rect x="5.3" y="2.9" width="3.4" height="4.3" fill="#dedede"/><circle cx="4.1" cy="5.8" r="1.75" fill="#d8d8d8"/><circle cx="4.1" cy="5.8" r="0.95" fill="#262626"/></svg>
<div class="t" style="top:469.44px;line-height:12px;font-size:6.7px;color:#d8d8d8;transform:scaleX(0.950);transform-origin:0 50%;left:1169px;">boy</div>
<svg style="left:1157.4px;top:487.3px;" width="9.5" height="8" viewBox="0 0 9.5 8"><path d="M0.3 4.6L4.9 0.3L6 1.4V7.2L4.2 8.2Z" fill="#c4c4c4"/><path d="M1.6 3.6L5 0.9M2.4 4.4L5.4 1.9" stroke="#8a8a8a" stroke-width="0.5"/><rect x="5.3" y="2.9" width="3.4" height="4.3" fill="#dedede"/><circle cx="4.1" cy="5.8" r="1.75" fill="#d8d8d8"/><circle cx="4.1" cy="5.8" r="0.95" fill="#262626"/></svg>
<div class="t" style="top:486.20px;line-height:12px;font-size:6.7px;color:#d8d8d8;transform:scaleX(0.950);transform-origin:0 50%;left:1169px;">boy back pose</div>
<svg style="left:1157.4px;top:504.06px;" width="9.5" height="8" viewBox="0 0 9.5 8"><path d="M0.3 4.6L4.9 0.3L6 1.4V7.2L4.2 8.2Z" fill="#c4c4c4"/><path d="M1.6 3.6L5 0.9M2.4 4.4L5.4 1.9" stroke="#8a8a8a" stroke-width="0.5"/><rect x="5.3" y="2.9" width="3.4" height="4.3" fill="#dedede"/><circle cx="4.1" cy="5.8" r="1.75" fill="#d8d8d8"/><circle cx="4.1" cy="5.8" r="0.95" fill="#262626"/></svg>
<div class="t" style="top:502.96px;line-height:12px;font-size:6.7px;color:#d8d8d8;transform:scaleX(0.950);transform-origin:0 50%;left:1169px;">boy2</div>
<svg style="left:1157.6px;top:521.42px;" width="8.5" height="7" viewBox="0 0 8.5 7"><rect x="0.4" y="0.6" width="7.6" height="6" fill="#e4e4e4"/><path d="M1 6L3 3.4L4.4 5L5.6 4L7.4 6Z" fill="#323232"/><circle cx="2.4" cy="2.2" r="0.8" fill="#323232"/></svg>
<div class="t" style="top:519.72px;line-height:12px;font-size:6.7px;color:#d8d8d8;transform:scaleX(0.950);transform-origin:0 50%;left:1169px;">brown-wood-textured-backgr...</div>
<svg style="left:1157.4px;top:537.58px;" width="9.5" height="8" viewBox="0 0 9.5 8"><path d="M0.3 4.6L4.9 0.3L6 1.4V7.2L4.2 8.2Z" fill="#c4c4c4"/><path d="M1.6 3.6L5 0.9M2.4 4.4L5.4 1.9" stroke="#8a8a8a" stroke-width="0.5"/><rect x="5.3" y="2.9" width="3.4" height="4.3" fill="#dedede"/><circle cx="4.1" cy="5.8" r="1.75" fill="#d8d8d8"/><circle cx="4.1" cy="5.8" r="0.95" fill="#262626"/></svg>
<div class="t" style="top:536.48px;line-height:12px;font-size:6.7px;color:#d8d8d8;transform:scaleX(0.950);transform-origin:0 50%;left:1169px;">cap</div>
<svg style="left:1157.4px;top:554.34px;" width="9.5" height="8" viewBox="0 0 9.5 8"><path d="M0.3 4.6L4.9 0.3L6 1.4V7.2L4.2 8.2Z" fill="#c4c4c4"/><path d="M1.6 3.6L5 0.9M2.4 4.4L5.4 1.9" stroke="#8a8a8a" stroke-width="0.5"/><rect x="5.3" y="2.9" width="3.4" height="4.3" fill="#dedede"/><circle cx="4.1" cy="5.8" r="1.75" fill="#d8d8d8"/><circle cx="4.1" cy="5.8" r="0.95" fill="#262626"/></svg>
<div class="t" style="top:553.24px;line-height:12px;font-size:6.7px;color:#d8d8d8;transform:scaleX(0.950);transform-origin:0 50%;left:1169px;">cds</div>
<svg style="left:1157.4px;top:571.1px;" width="9.5" height="8" viewBox="0 0 9.5 8"><path d="M0.3 4.6L4.9 0.3L6 1.4V7.2L4.2 8.2Z" fill="#c4c4c4"/><path d="M1.6 3.6L5 0.9M2.4 4.4L5.4 1.9" stroke="#8a8a8a" stroke-width="0.5"/><rect x="5.3" y="2.9" width="3.4" height="4.3" fill="#dedede"/><circle cx="4.1" cy="5.8" r="1.75" fill="#d8d8d8"/><circle cx="4.1" cy="5.8" r="0.95" fill="#262626"/></svg>
<div class="t" style="top:570.00px;line-height:12px;font-size:6.7px;color:#d8d8d8;transform:scaleX(0.950);transform-origin:0 50%;left:1169px;">choti</div>
<svg style="left:1157.4px;top:587.86px;" width="9.5" height="8" viewBox="0 0 9.5 8"><path d="M0.3 4.6L4.9 0.3L6 1.4V7.2L4.2 8.2Z" fill="#c4c4c4"/><path d="M1.6 3.6L5 0.9M2.4 4.4L5.4 1.9" stroke="#8a8a8a" stroke-width="0.5"/><rect x="5.3" y="2.9" width="3.4" height="4.3" fill="#dedede"/><circle cx="4.1" cy="5.8" r="1.75" fill="#d8d8d8"/><circle cx="4.1" cy="5.8" r="0.95" fill="#262626"/></svg>
<div class="t" style="top:586.76px;line-height:12px;font-size:6.7px;color:#d8d8d8;transform:scaleX(0.950);transform-origin:0 50%;left:1169px;">cloth</div>
<svg style="left:1157.4px;top:604.62px;" width="9.5" height="8" viewBox="0 0 9.5 8"><path d="M0.3 4.6L4.9 0.3L6 1.4V7.2L4.2 8.2Z" fill="#c4c4c4"/><path d="M1.6 3.6L5 0.9M2.4 4.4L5.4 1.9" stroke="#8a8a8a" stroke-width="0.5"/><rect x="5.3" y="2.9" width="3.4" height="4.3" fill="#dedede"/><circle cx="4.1" cy="5.8" r="1.75" fill="#d8d8d8"/><circle cx="4.1" cy="5.8" r="0.95" fill="#262626"/></svg>
<div class="t" style="top:603.52px;line-height:12px;font-size:6.7px;color:#d8d8d8;transform:scaleX(0.950);transform-origin:0 50%;left:1169px;">dhoti latkan</div>
<svg style="left:1157.4px;top:621.38px;" width="9.5" height="8" viewBox="0 0 9.5 8"><path d="M0.3 4.6L4.9 0.3L6 1.4V7.2L4.2 8.2Z" fill="#c4c4c4"/><path d="M1.6 3.6L5 0.9M2.4 4.4L5.4 1.9" stroke="#8a8a8a" stroke-width="0.5"/><rect x="5.3" y="2.9" width="3.4" height="4.3" fill="#dedede"/><circle cx="4.1" cy="5.8" r="1.75" fill="#d8d8d8"/><circle cx="4.1" cy="5.8" r="0.95" fill="#262626"/></svg>
<div class="t" style="top:620.28px;line-height:12px;font-size:6.7px;color:#d8d8d8;transform:scaleX(0.950);transform-origin:0 50%;left:1169px;">down body</div>
<svg style="left:1157.4px;top:638.14px;" width="9.5" height="8" viewBox="0 0 9.5 8"><path d="M0.3 4.6L4.9 0.3L6 1.4V7.2L4.2 8.2Z" fill="#c4c4c4"/><path d="M1.6 3.6L5 0.9M2.4 4.4L5.4 1.9" stroke="#8a8a8a" stroke-width="0.5"/><rect x="5.3" y="2.9" width="3.4" height="4.3" fill="#dedede"/><circle cx="4.1" cy="5.8" r="1.75" fill="#d8d8d8"/><circle cx="4.1" cy="5.8" r="0.95" fill="#262626"/></svg>
<div class="t" style="top:637.04px;line-height:12px;font-size:6.7px;color:#d8d8d8;transform:scaleX(0.950);transform-origin:0 50%;left:1169px;">down cloth</div>
<svg style="left:1157.4px;top:654.9px;" width="9.5" height="8" viewBox="0 0 9.5 8"><path d="M0.3 4.6L4.9 0.3L6 1.4V7.2L4.2 8.2Z" fill="#c4c4c4"/><path d="M1.6 3.6L5 0.9M2.4 4.4L5.4 1.9" stroke="#8a8a8a" stroke-width="0.5"/><rect x="5.3" y="2.9" width="3.4" height="4.3" fill="#dedede"/><circle cx="4.1" cy="5.8" r="1.75" fill="#d8d8d8"/><circle cx="4.1" cy="5.8" r="0.95" fill="#262626"/></svg>
<div class="t" style="top:653.80px;line-height:12px;font-size:6.7px;color:#d8d8d8;transform:scaleX(0.950);transform-origin:0 50%;left:1169px;">down saree</div>
<svg style="left:1157.4px;top:671.96px;" width="9.2" height="7.6" viewBox="0 0 9.2 7.6"><path d="M0.3 1.2Q0.3 0.6 0.9 0.6H3.4L4.2 1.6H8.2Q8.8 1.6 8.8 2.2V6.6Q8.8 7.2 8.2 7.2H0.9Q0.3 7.2 0.3 6.6Z" fill="#dcdcdc"/></svg>
<svg style="left:1149px;top:673.26px;" width="4" height="5.4" viewBox="0 0 4 5.4"><path d="M0.7 0.4L3.1 2.7L0.7 5" fill="none" stroke="#f0f0f0" stroke-width="1.2"/></svg>
<div class="t" style="top:670.56px;line-height:12px;font-size:6.7px;color:#d8d8d8;transform:scaleX(0.950);transform-origin:0 50%;left:1169px;">Duplicate Items Folder</div>
<svg style="left:1157.4px;top:688.42px;" width="9.5" height="8" viewBox="0 0 9.5 8"><path d="M0.3 4.6L4.9 0.3L6 1.4V7.2L4.2 8.2Z" fill="#c4c4c4"/><path d="M1.6 3.6L5 0.9M2.4 4.4L5.4 1.9" stroke="#8a8a8a" stroke-width="0.5"/><rect x="5.3" y="2.9" width="3.4" height="4.3" fill="#dedede"/><circle cx="4.1" cy="5.8" r="1.75" fill="#d8d8d8"/><circle cx="4.1" cy="5.8" r="0.95" fill="#262626"/></svg>
<div class="t" style="top:687.32px;line-height:12px;font-size:6.7px;color:#d8d8d8;transform:scaleX(0.950);transform-origin:0 50%;left:1169px;">ear</div>
<div style="left:1145.5px;top:697.4px;width:154.5px;height:9px;background:#323232;"></div>
<svg style="left:1146.5px;top:698.4px;" width="6" height="6" viewBox="0 0 6 6"><rect x="0.4" y="0.4" width="5" height="5" fill="none" stroke="#d0d0d0" stroke-width="0.7"/><path d="M2.9 1.6V4.2M1.6 2.9H4.2" stroke="#d0d0d0" stroke-width="0.7"/></svg>
<svg style="left:1154px;top:698.6px;" width="7" height="6" viewBox="0 0 7 6"><path d="M0.3 1Q0.3 0.5 0.8 0.5H2.6L3.2 1.3H6.2Q6.7 1.3 6.7 1.8V5Q6.7 5.5 6.2 5.5H0.8Q0.3 5.5 0.3 5Z" fill="#dcdcdc"/></svg>
<svg style="left:1163.4px;top:698.2px;" width="6.5" height="6.5" viewBox="0 0 6.5 6.5"><circle cx="3.1" cy="3.1" r="2.9" fill="#dcdcdc"/><rect x="2.7" y="2.6" width="0.9" height="2.4" fill="#323232"/><rect x="2.7" y="1.2" width="0.9" height="0.9" fill="#323232"/></svg>
<svg style="left:1172.8px;top:698px;" width="6" height="7" viewBox="0 0 6 7"><path d="M0.4 1.4H5.4M2 1.4V0.5H3.8V1.4M0.9 1.6L1.3 6.4H4.5L4.9 1.6Z" fill="#7a7a7a" stroke="#8a8a8a" stroke-width="0.5"/></svg>
<div style="left:1181.5px;top:700.8px;width:57.5px;height:2.5px;background:#5e5e5e;border-radius:1.2px"></div>
</div></body></html>
